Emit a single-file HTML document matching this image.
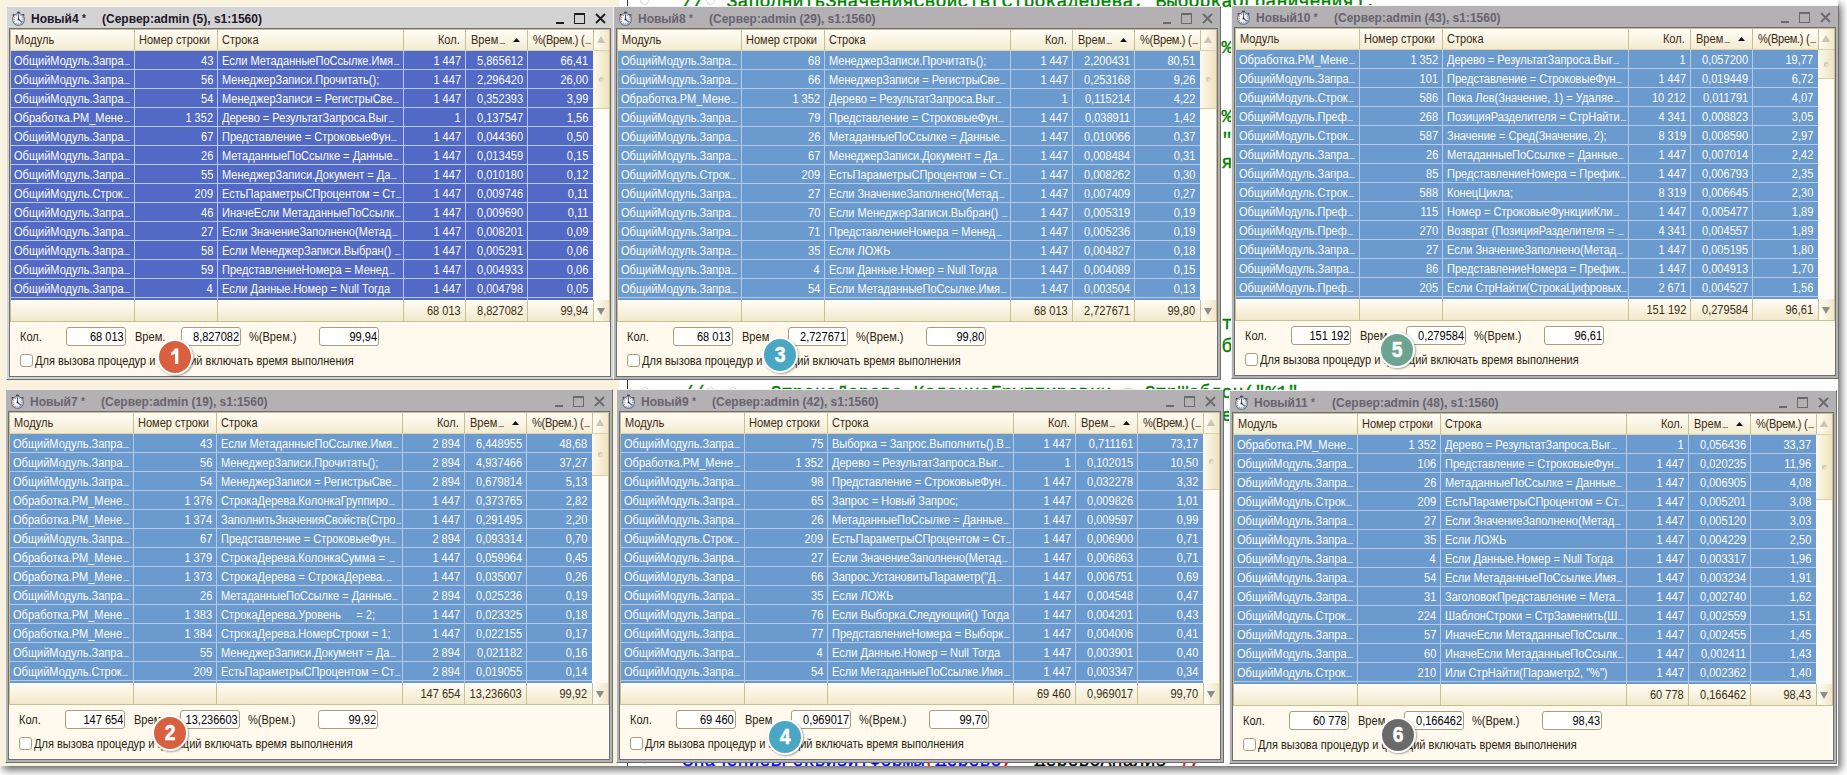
<!DOCTYPE html><html><head><meta charset="utf-8"><style>
*{margin:0;padding:0;box-sizing:border-box}
html,body{width:1847px;height:775px;overflow:hidden;background:#fff}
body{position:relative;font-family:"Liberation Sans",sans-serif;font-size:11px;color:#000}
.a{position:absolute}
.t{position:absolute;white-space:pre;line-height:19px;height:19px;font-size:12px}
.t>span,.lbl>span,.inp>span{display:inline-block;transform:scaleX(.92);transform-origin:0 0}
.r>span,.inp>span{transform-origin:100% 0}
.r{text-align:right}
.w{position:absolute;width:608px;height:374px;border:1px solid;overflow:hidden}
.cb{position:absolute;left:2px;top:21px;width:602px;height:349px;border:1px solid #6e6e6e;background:#fffaed;overflow:hidden}
.tt{position:absolute;top:3px;font-weight:bold;font-size:12px;line-height:19px;white-space:pre}
.hdr{position:absolute;height:20px;background:linear-gradient(#fffdf6,#f3ebd1)}
.ftr{position:absolute;height:21px;background:linear-gradient(#fffdf6,#f1e8cb)}
.vl{position:absolute;width:1px}
.code{position:absolute;-webkit-text-stroke:.35px currentColor;font-family:"Liberation Mono",monospace;font-size:18.33px;line-height:23px;white-space:pre;color:#008000}
.inp{position:absolute;font-size:12px;width:60px;height:19px;border:1px solid #a79f7a;border-radius:3px;background:#fff;text-align:right;padding-right:1px;padding-top:1px;line-height:17px;white-space:pre}
.lbl{position:absolute;white-space:pre;line-height:19px;font-size:12px}
.badge{position:absolute;width:36px;height:36px;border-radius:50%;border:2.5px solid #fff;color:#fff;font-weight:bold;font-size:22px;line-height:31px;text-align:center;box-shadow:1px 1px 2px rgba(0,0,0,.35)}
.el{display:inline-block;width:6px;height:1px;margin-left:1px;vertical-align:0;background:currentColor;opacity:.55}
.mk{position:absolute;width:9px;height:9px;border:1px solid #d4d4d4;border-radius:50%}
</style></head><body>

<div class="a" style="left:0;top:0;width:1838px;height:766px;box-shadow:3px 4px 8px rgba(0,0,0,.6);background:#fff"></div>
<div class="a" style="left:0;top:0;width:619px;height:766px;background:#f8f1de"></div>
<div class="a" style="left:0;top:0;width:1838px;height:766px;overflow:hidden">
<div class="a" style="left:627px;top:0;width:1px;height:766px;background:#303030"></div>
<div class="code" style="left:682.5px;top:-9px;color:#008000">//</div>
<div class="code" style="left:726.5px;top:-9px;color:#008000">ЗаполнитьЗначенияСвойств(СтрокаДерева, ВыборкаОграничения);</div>
<div class="mk" style="left:639.5px;top:-4px"></div>
<div class="mk" style="left:705.5px;top:-4px"></div>
<div class="code" style="left:1221.5px;top:37px;color:#008000">%</div>
<div class="code" style="left:1221.5px;top:106px;color:#008000">%</div>
<div class="code" style="left:1221.5px;top:129px;color:#008000">"</div>
<div class="code" style="left:1221.5px;top:152px;color:#008000">я</div>
<div class="code" style="left:1221.5px;top:313px;color:#008000">т</div>
<div class="code" style="left:1221.5px;top:336px;color:#008000">б</div>
<div class="code" style="left:1221.5px;top:405px;color:#008000">е</div>
<div class="code" style="left:682.5px;top:382px;color:#008000">//</div>
<div class="code" style="left:770.5px;top:382px;color:#008000">СтрокаДерева.КолонкаГруппировки = СтрШаблон("%1"</div>
<div class="mk" style="left:639.5px;top:387px"></div>
<div class="mk" style="left:705.5px;top:387px"></div>
<div class="mk" style="left:727.5px;top:387px"></div>
<div class="code" style="left:682.5px;top:750px;color:#0000ff">ЗначениеВРеквизитФормы</div>
<div class="code" style="left:924.5px;top:750px;color:#ff0000">(</div>
<div class="code" style="left:935.5px;top:750px;color:#0000ff">Дерево</div>
<div class="code" style="left:1001.5px;top:750px;color:#ff0000">,</div>
<div class="code" style="left:1023.5px;top:750px;color:#000000">"ДеревоАнализ"</div>
<div class="code" style="left:1177.5px;top:750px;color:#ff0000">);</div>
<div class="mk" style="left:639.5px;top:755px"></div>
</div>
<div class="w" style="left:6px;top:6px;background:#d3d3d3;border-color:#f4f4f4 #6e6e6e #6e6e6e #f4f4f4">
<svg class="a" style="left:4px;top:3px" width="16" height="16" viewBox="0 0 16 16"><rect x="6.2" y="1.7" width="2.6" height="1.2" fill="#2a2a2a"/><rect x="7" y="2.6" width="1" height="1.6" fill="#3d6b8f"/><path d="M1.8 5.6 L3.3 4.2 M13.2 5.6 L11.7 4.2" stroke="#2f2f2f" stroke-width="1.5"/><defs><linearGradient id="cg" x1="0" y1="0" x2="1" y2="1"><stop offset="0.3" stop-color="#ffffff"/><stop offset="1" stop-color="#bcdcf5"/></linearGradient></defs><circle cx="7.5" cy="9.4" r="5.9" fill="url(#cg)" stroke="#4f7a98" stroke-width="1.1"/><circle cx="7.50" cy="4.90" r="0.65" fill="#ee6a4c"/><circle cx="9.75" cy="5.50" r="0.65" fill="#ee6a4c"/><circle cx="11.40" cy="7.15" r="0.65" fill="#ee6a4c"/><circle cx="12.00" cy="9.40" r="0.65" fill="#ee6a4c"/><circle cx="11.40" cy="11.65" r="0.65" fill="#ee6a4c"/><circle cx="9.75" cy="13.30" r="0.65" fill="#ee6a4c"/><circle cx="7.50" cy="13.90" r="0.65" fill="#ee6a4c"/><circle cx="5.25" cy="13.30" r="0.65" fill="#ee6a4c"/><circle cx="3.60" cy="11.65" r="0.65" fill="#ee6a4c"/><circle cx="3.00" cy="9.40" r="0.65" fill="#ee6a4c"/><circle cx="3.60" cy="7.15" r="0.65" fill="#ee6a4c"/><circle cx="5.25" cy="5.50" r="0.65" fill="#ee6a4c"/><path d="M7.5 9.4 V4.4 M7.5 9.4 L11.1 12.4" stroke="#2a6494" stroke-width="1.1"/><circle cx="7.5" cy="9.4" r="0.9" fill="#222"/></svg>
<div class="tt" style="left:24px;color:#1e1628">Новый4 <span style="font-size:10px;position:relative;top:-1px">*</span></div>
<div class="tt" style="left:95px;color:#1e1628">(Сервер:admin (5), s1:1560)</div>
<div class="a" style="left:549px;top:15px;width:8px;height:2px;background:#1c1c1c"></div>
<div class="a" style="left:567px;top:6px;width:11px;height:11px;border:1px solid #1c1c1c;border-top-width:2px"></div>
<svg class="a" style="left:588px;top:6px" width="11" height="11" viewBox="0 0 11 11"><path d="M1 1 L10 10 M10 1 L1 10" stroke="#1c1c1c" stroke-width="1.8"/></svg>
<div class="cb">
<div class="a" style="left:0;top:0;width:600px;height:293px;border:1px solid #c9bf95;background:#fdfbf4"></div>
<div class="hdr" style="left:1px;top:1px;width:598px"></div>
<div class="a" style="left:1px;top:21px;width:598px;height:1px;background:#ddd2a8"></div>
<div class="a" style="left:1px;top:22px;width:582px;height:249px;background:#5269c6"></div>
<div class="a" style="left:1px;top:40px;width:582px;height:1px;background:#b6c9e6"></div>
<div class="a" style="left:1px;top:59px;width:582px;height:1px;background:#b6c9e6"></div>
<div class="a" style="left:1px;top:78px;width:582px;height:1px;background:#b6c9e6"></div>
<div class="a" style="left:1px;top:97px;width:582px;height:1px;background:#b6c9e6"></div>
<div class="a" style="left:1px;top:116px;width:582px;height:1px;background:#b6c9e6"></div>
<div class="a" style="left:1px;top:135px;width:582px;height:1px;background:#b6c9e6"></div>
<div class="a" style="left:1px;top:154px;width:582px;height:1px;background:#b6c9e6"></div>
<div class="a" style="left:1px;top:173px;width:582px;height:1px;background:#b6c9e6"></div>
<div class="a" style="left:1px;top:192px;width:582px;height:1px;background:#b6c9e6"></div>
<div class="a" style="left:1px;top:211px;width:582px;height:1px;background:#b6c9e6"></div>
<div class="a" style="left:1px;top:230px;width:582px;height:1px;background:#b6c9e6"></div>
<div class="a" style="left:1px;top:249px;width:582px;height:1px;background:#b6c9e6"></div>
<div class="a" style="left:1px;top:268px;width:582px;height:1px;background:#b6c9e6"></div>
<div class="ftr" style="left:1px;top:271px;width:598px"></div>
<div class="vl" style="left:124px;top:22px;height:249px;background:#b6c9e6"></div>
<div class="vl" style="left:124px;top:1px;height:20px;background:#c9bf95"></div>
<div class="vl" style="left:124px;top:271px;height:21px;background:#c9bf95"></div>
<div class="vl" style="left:207px;top:22px;height:249px;background:#b6c9e6"></div>
<div class="vl" style="left:207px;top:1px;height:20px;background:#c9bf95"></div>
<div class="vl" style="left:207px;top:271px;height:21px;background:#c9bf95"></div>
<div class="vl" style="left:393px;top:22px;height:249px;background:#b6c9e6"></div>
<div class="vl" style="left:393px;top:1px;height:20px;background:#c9bf95"></div>
<div class="vl" style="left:393px;top:271px;height:21px;background:#c9bf95"></div>
<div class="vl" style="left:455px;top:22px;height:249px;background:#b6c9e6"></div>
<div class="vl" style="left:455px;top:1px;height:20px;background:#c9bf95"></div>
<div class="vl" style="left:455px;top:271px;height:21px;background:#c9bf95"></div>
<div class="vl" style="left:517px;top:22px;height:249px;background:#b6c9e6"></div>
<div class="vl" style="left:517px;top:1px;height:20px;background:#c9bf95"></div>
<div class="vl" style="left:517px;top:271px;height:21px;background:#c9bf95"></div>
<div class="t" style="left:5px;top:2px;color:#3a2a10"><span>Модуль</span></div>
<div class="t" style="left:129px;top:2px;color:#3a2a10"><span>Номер строки</span></div>
<div class="t" style="left:212px;top:2px;color:#3a2a10"><span>Строка</span></div>
<div class="t r" style="left:394px;width:56px;top:2px;color:#3a2a10"><span>Кол.</span></div>
<div class="t" style="left:461px;top:2px;color:#3a2a10"><span>Врем<i class="el"></i></span></div>
<svg class="a" style="left:503px;top:9px" width="7" height="4"><path d="M0 4 L3.5 0 L7 4Z" fill="#111"/></svg>
<div class="t" style="left:523px;top:2px;color:#3a2a10;letter-spacing:-0.3px"><span>%(Врем.) (<i class="el"></i></span></div>
<div class="a" style="left:583px;top:1px;width:16px;height:20px;border-left:1px solid #c9bf95;background:linear-gradient(90deg,#fffdf5,#f1e8c8)"></div>
<svg class="a" style="left:587px;top:7px" width="8" height="7"><path d="M0 7 L4 0 L8 7Z" fill="#c9c5b3"/></svg>
<div class="a" style="left:583px;top:22px;width:16px;height:58px;background:linear-gradient(90deg,#fdf9ec,#eee3bd);border-bottom:1px solid #d9cea4"></div>
<div class="a" style="left:589px;top:48px;width:5px;height:5px;border-radius:50%;background:radial-gradient(circle at 65% 65%,#ebe5cf 15%,#b7b093 95%)"></div>
<div class="a" style="left:583px;top:271px;width:16px;height:21px;border-left:1px solid #c9bf95;background:linear-gradient(90deg,#fffdf5,#efe6c6)"></div>
<svg class="a" style="left:587px;top:279px" width="8" height="7"><path d="M0 0 L8 0 L4 7Z" fill="#8c8c8c"/></svg>
<div class="t" style="left:4px;top:23px;color:#fff"><span>ОбщийМодуль.Запра<i class="el"></i></span></div>
<div class="t r" style="left:125px;width:78px;top:23px;color:#fff"><span>43</span></div>
<div class="t" style="left:212px;top:23px;color:#fff;width:180px;overflow:hidden"><span>Если МетаданныеПоСсылке.Имя<i class="el"></i></span></div>
<div class="t r" style="left:394px;width:57px;top:23px;color:#fff"><span>1 447</span></div>
<div class="t r" style="left:456px;width:57px;top:23px;color:#fff"><span>5,865612</span></div>
<div class="t r" style="left:518px;width:60px;top:23px;color:#fff"><span>66,41</span></div>
<div class="t" style="left:4px;top:42px;color:#fff"><span>ОбщийМодуль.Запра<i class="el"></i></span></div>
<div class="t r" style="left:125px;width:78px;top:42px;color:#fff"><span>56</span></div>
<div class="t" style="left:212px;top:42px;color:#fff;width:180px;overflow:hidden"><span>МенеджерЗаписи.Прочитать();</span></div>
<div class="t r" style="left:394px;width:57px;top:42px;color:#fff"><span>1 447</span></div>
<div class="t r" style="left:456px;width:57px;top:42px;color:#fff"><span>2,296420</span></div>
<div class="t r" style="left:518px;width:60px;top:42px;color:#fff"><span>26,00</span></div>
<div class="t" style="left:4px;top:61px;color:#fff"><span>ОбщийМодуль.Запра<i class="el"></i></span></div>
<div class="t r" style="left:125px;width:78px;top:61px;color:#fff"><span>54</span></div>
<div class="t" style="left:212px;top:61px;color:#fff;width:180px;overflow:hidden"><span>МенеджерЗаписи = РегистрыСве<i class="el"></i></span></div>
<div class="t r" style="left:394px;width:57px;top:61px;color:#fff"><span>1 447</span></div>
<div class="t r" style="left:456px;width:57px;top:61px;color:#fff"><span>0,352393</span></div>
<div class="t r" style="left:518px;width:60px;top:61px;color:#fff"><span>3,99</span></div>
<div class="t" style="left:4px;top:80px;color:#fff"><span>Обработка.РМ_Мене<i class="el"></i></span></div>
<div class="t r" style="left:125px;width:78px;top:80px;color:#fff"><span>1 352</span></div>
<div class="t" style="left:212px;top:80px;color:#fff;width:180px;overflow:hidden"><span>Дерево = РезультатЗапроса.Выг<i class="el"></i></span></div>
<div class="t r" style="left:394px;width:57px;top:80px;color:#fff"><span>1</span></div>
<div class="t r" style="left:456px;width:57px;top:80px;color:#fff"><span>0,137547</span></div>
<div class="t r" style="left:518px;width:60px;top:80px;color:#fff"><span>1,56</span></div>
<div class="t" style="left:4px;top:99px;color:#fff"><span>ОбщийМодуль.Запра<i class="el"></i></span></div>
<div class="t r" style="left:125px;width:78px;top:99px;color:#fff"><span>67</span></div>
<div class="t" style="left:212px;top:99px;color:#fff;width:180px;overflow:hidden"><span>Представление = СтроковыеФун<i class="el"></i></span></div>
<div class="t r" style="left:394px;width:57px;top:99px;color:#fff"><span>1 447</span></div>
<div class="t r" style="left:456px;width:57px;top:99px;color:#fff"><span>0,044360</span></div>
<div class="t r" style="left:518px;width:60px;top:99px;color:#fff"><span>0,50</span></div>
<div class="t" style="left:4px;top:118px;color:#fff"><span>ОбщийМодуль.Запра<i class="el"></i></span></div>
<div class="t r" style="left:125px;width:78px;top:118px;color:#fff"><span>26</span></div>
<div class="t" style="left:212px;top:118px;color:#fff;width:180px;overflow:hidden"><span>МетаданныеПоСсылке = Данные<i class="el"></i></span></div>
<div class="t r" style="left:394px;width:57px;top:118px;color:#fff"><span>1 447</span></div>
<div class="t r" style="left:456px;width:57px;top:118px;color:#fff"><span>0,013459</span></div>
<div class="t r" style="left:518px;width:60px;top:118px;color:#fff"><span>0,15</span></div>
<div class="t" style="left:4px;top:137px;color:#fff"><span>ОбщийМодуль.Запра<i class="el"></i></span></div>
<div class="t r" style="left:125px;width:78px;top:137px;color:#fff"><span>55</span></div>
<div class="t" style="left:212px;top:137px;color:#fff;width:180px;overflow:hidden"><span>МенеджерЗаписи.Документ = Да<i class="el"></i></span></div>
<div class="t r" style="left:394px;width:57px;top:137px;color:#fff"><span>1 447</span></div>
<div class="t r" style="left:456px;width:57px;top:137px;color:#fff"><span>0,010180</span></div>
<div class="t r" style="left:518px;width:60px;top:137px;color:#fff"><span>0,12</span></div>
<div class="t" style="left:4px;top:156px;color:#fff"><span>ОбщийМодуль.Строк<i class="el"></i></span></div>
<div class="t r" style="left:125px;width:78px;top:156px;color:#fff"><span>209</span></div>
<div class="t" style="left:212px;top:156px;color:#fff;width:180px;overflow:hidden"><span>ЕстьПараметрыСПроцентом = Ст<i class="el"></i></span></div>
<div class="t r" style="left:394px;width:57px;top:156px;color:#fff"><span>1 447</span></div>
<div class="t r" style="left:456px;width:57px;top:156px;color:#fff"><span>0,009746</span></div>
<div class="t r" style="left:518px;width:60px;top:156px;color:#fff"><span>0,11</span></div>
<div class="t" style="left:4px;top:175px;color:#fff"><span>ОбщийМодуль.Запра<i class="el"></i></span></div>
<div class="t r" style="left:125px;width:78px;top:175px;color:#fff"><span>46</span></div>
<div class="t" style="left:212px;top:175px;color:#fff;width:180px;overflow:hidden"><span>ИначеЕсли МетаданныеПоСсылк<i class="el"></i></span></div>
<div class="t r" style="left:394px;width:57px;top:175px;color:#fff"><span>1 447</span></div>
<div class="t r" style="left:456px;width:57px;top:175px;color:#fff"><span>0,009690</span></div>
<div class="t r" style="left:518px;width:60px;top:175px;color:#fff"><span>0,11</span></div>
<div class="t" style="left:4px;top:194px;color:#fff"><span>ОбщийМодуль.Запра<i class="el"></i></span></div>
<div class="t r" style="left:125px;width:78px;top:194px;color:#fff"><span>27</span></div>
<div class="t" style="left:212px;top:194px;color:#fff;width:180px;overflow:hidden"><span>Если ЗначениеЗаполнено(Метад<i class="el"></i></span></div>
<div class="t r" style="left:394px;width:57px;top:194px;color:#fff"><span>1 447</span></div>
<div class="t r" style="left:456px;width:57px;top:194px;color:#fff"><span>0,008201</span></div>
<div class="t r" style="left:518px;width:60px;top:194px;color:#fff"><span>0,09</span></div>
<div class="t" style="left:4px;top:213px;color:#fff"><span>ОбщийМодуль.Запра<i class="el"></i></span></div>
<div class="t r" style="left:125px;width:78px;top:213px;color:#fff"><span>58</span></div>
<div class="t" style="left:212px;top:213px;color:#fff;width:180px;overflow:hidden"><span>Если МенеджерЗаписи.Выбран() <i class="el"></i></span></div>
<div class="t r" style="left:394px;width:57px;top:213px;color:#fff"><span>1 447</span></div>
<div class="t r" style="left:456px;width:57px;top:213px;color:#fff"><span>0,005291</span></div>
<div class="t r" style="left:518px;width:60px;top:213px;color:#fff"><span>0,06</span></div>
<div class="t" style="left:4px;top:232px;color:#fff"><span>ОбщийМодуль.Запра<i class="el"></i></span></div>
<div class="t r" style="left:125px;width:78px;top:232px;color:#fff"><span>59</span></div>
<div class="t" style="left:212px;top:232px;color:#fff;width:180px;overflow:hidden"><span>ПредставлениеНомера = Менед<i class="el"></i></span></div>
<div class="t r" style="left:394px;width:57px;top:232px;color:#fff"><span>1 447</span></div>
<div class="t r" style="left:456px;width:57px;top:232px;color:#fff"><span>0,004933</span></div>
<div class="t r" style="left:518px;width:60px;top:232px;color:#fff"><span>0,06</span></div>
<div class="t" style="left:4px;top:251px;color:#fff"><span>ОбщийМодуль.Запра<i class="el"></i></span></div>
<div class="t r" style="left:125px;width:78px;top:251px;color:#fff"><span>4</span></div>
<div class="t" style="left:212px;top:251px;color:#fff;width:180px;overflow:hidden"><span>Если Данные.Номер = Null Тогда</span></div>
<div class="t r" style="left:394px;width:57px;top:251px;color:#fff"><span>1 447</span></div>
<div class="t r" style="left:456px;width:57px;top:251px;color:#fff"><span>0,004798</span></div>
<div class="t r" style="left:518px;width:60px;top:251px;color:#fff"><span>0,05</span></div>
<div class="t r" style="left:394px;width:57px;top:273px;color:#3a2e10"><span>68 013</span></div>
<div class="t r" style="left:456px;width:57px;top:273px;color:#3a2e10"><span>8,827082</span></div>
<div class="t r" style="left:518px;width:60px;top:273px;color:#3a2e10"><span>99,94</span></div>
<div class="lbl" style="left:10px;top:299px;color:#2b2210"><span>Кол.</span></div>
<div class="inp" style="left:56px;top:298px"><span>68 013</span></div>
<div class="lbl" style="left:125px;top:299px;color:#2b2210"><span>Врем.</span></div>
<div class="inp" style="left:171px;top:298px"><span>8,827082</span></div>
<div class="lbl" style="left:239px;top:299px;color:#2b2210"><span>%(Врем.)</span></div>
<div class="inp" style="left:309px;top:298px"><span>99,94</span></div>
<div class="a" style="left:10px;top:325px;width:13px;height:13px;border:1px solid #a79f7a;border-radius:3px;background:#fff"></div>
<div class="lbl" style="left:25px;top:323px;color:#2b2210"><span>Для вызова процедур и функций включать время выполнения</span></div>
</div>
</div>
<div class="w" style="left:613px;top:6px;background:#b3b1b4;border-color:#f4f4f4 #6e6e6e #6e6e6e #f4f4f4">
<svg class="a" style="left:4px;top:3px" width="16" height="16" viewBox="0 0 16 16"><rect x="6.2" y="1.7" width="2.6" height="1.2" fill="#2a2a2a"/><rect x="7" y="2.6" width="1" height="1.6" fill="#3d6b8f"/><path d="M1.8 5.6 L3.3 4.2 M13.2 5.6 L11.7 4.2" stroke="#2f2f2f" stroke-width="1.5"/><defs><linearGradient id="cg" x1="0" y1="0" x2="1" y2="1"><stop offset="0.3" stop-color="#ffffff"/><stop offset="1" stop-color="#bcdcf5"/></linearGradient></defs><circle cx="7.5" cy="9.4" r="5.9" fill="url(#cg)" stroke="#4f7a98" stroke-width="1.1"/><circle cx="7.50" cy="4.90" r="0.65" fill="#ee6a4c"/><circle cx="9.75" cy="5.50" r="0.65" fill="#ee6a4c"/><circle cx="11.40" cy="7.15" r="0.65" fill="#ee6a4c"/><circle cx="12.00" cy="9.40" r="0.65" fill="#ee6a4c"/><circle cx="11.40" cy="11.65" r="0.65" fill="#ee6a4c"/><circle cx="9.75" cy="13.30" r="0.65" fill="#ee6a4c"/><circle cx="7.50" cy="13.90" r="0.65" fill="#ee6a4c"/><circle cx="5.25" cy="13.30" r="0.65" fill="#ee6a4c"/><circle cx="3.60" cy="11.65" r="0.65" fill="#ee6a4c"/><circle cx="3.00" cy="9.40" r="0.65" fill="#ee6a4c"/><circle cx="3.60" cy="7.15" r="0.65" fill="#ee6a4c"/><circle cx="5.25" cy="5.50" r="0.65" fill="#ee6a4c"/><path d="M7.5 9.4 V4.4 M7.5 9.4 L11.1 12.4" stroke="#2a6494" stroke-width="1.1"/><circle cx="7.5" cy="9.4" r="0.9" fill="#222"/></svg>
<div class="tt" style="left:24px;color:#68636d">Новый8 <span style="font-size:10px;position:relative;top:-1px">*</span></div>
<div class="tt" style="left:95px;color:#68636d">(Сервер:admin (29), s1:1560)</div>
<div class="a" style="left:549px;top:15px;width:8px;height:2px;background:#6a6a6a"></div>
<div class="a" style="left:567px;top:6px;width:11px;height:11px;border:1px solid #6a6a6a;border-top-width:2px"></div>
<svg class="a" style="left:588px;top:6px" width="11" height="11" viewBox="0 0 11 11"><path d="M1 1 L10 10 M10 1 L1 10" stroke="#6a6a6a" stroke-width="1.8"/></svg>
<div class="cb">
<div class="a" style="left:0;top:0;width:600px;height:293px;border:1px solid #c9bf95;background:#fdfbf4"></div>
<div class="hdr" style="left:1px;top:1px;width:598px"></div>
<div class="a" style="left:1px;top:21px;width:598px;height:1px;background:#ddd2a8"></div>
<div class="a" style="left:1px;top:22px;width:582px;height:249px;background:#6b9ace"></div>
<div class="a" style="left:1px;top:40px;width:582px;height:1px;background:#b6c9e6"></div>
<div class="a" style="left:1px;top:59px;width:582px;height:1px;background:#b6c9e6"></div>
<div class="a" style="left:1px;top:78px;width:582px;height:1px;background:#b6c9e6"></div>
<div class="a" style="left:1px;top:97px;width:582px;height:1px;background:#b6c9e6"></div>
<div class="a" style="left:1px;top:116px;width:582px;height:1px;background:#b6c9e6"></div>
<div class="a" style="left:1px;top:135px;width:582px;height:1px;background:#b6c9e6"></div>
<div class="a" style="left:1px;top:154px;width:582px;height:1px;background:#b6c9e6"></div>
<div class="a" style="left:1px;top:173px;width:582px;height:1px;background:#b6c9e6"></div>
<div class="a" style="left:1px;top:192px;width:582px;height:1px;background:#b6c9e6"></div>
<div class="a" style="left:1px;top:211px;width:582px;height:1px;background:#b6c9e6"></div>
<div class="a" style="left:1px;top:230px;width:582px;height:1px;background:#b6c9e6"></div>
<div class="a" style="left:1px;top:249px;width:582px;height:1px;background:#b6c9e6"></div>
<div class="a" style="left:1px;top:268px;width:582px;height:1px;background:#b6c9e6"></div>
<div class="ftr" style="left:1px;top:271px;width:598px"></div>
<div class="vl" style="left:124px;top:22px;height:249px;background:#b6c9e6"></div>
<div class="vl" style="left:124px;top:1px;height:20px;background:#c9bf95"></div>
<div class="vl" style="left:124px;top:271px;height:21px;background:#c9bf95"></div>
<div class="vl" style="left:207px;top:22px;height:249px;background:#b6c9e6"></div>
<div class="vl" style="left:207px;top:1px;height:20px;background:#c9bf95"></div>
<div class="vl" style="left:207px;top:271px;height:21px;background:#c9bf95"></div>
<div class="vl" style="left:393px;top:22px;height:249px;background:#b6c9e6"></div>
<div class="vl" style="left:393px;top:1px;height:20px;background:#c9bf95"></div>
<div class="vl" style="left:393px;top:271px;height:21px;background:#c9bf95"></div>
<div class="vl" style="left:455px;top:22px;height:249px;background:#b6c9e6"></div>
<div class="vl" style="left:455px;top:1px;height:20px;background:#c9bf95"></div>
<div class="vl" style="left:455px;top:271px;height:21px;background:#c9bf95"></div>
<div class="vl" style="left:517px;top:22px;height:249px;background:#b6c9e6"></div>
<div class="vl" style="left:517px;top:1px;height:20px;background:#c9bf95"></div>
<div class="vl" style="left:517px;top:271px;height:21px;background:#c9bf95"></div>
<div class="t" style="left:5px;top:2px;color:#3a2a10"><span>Модуль</span></div>
<div class="t" style="left:129px;top:2px;color:#3a2a10"><span>Номер строки</span></div>
<div class="t" style="left:212px;top:2px;color:#3a2a10"><span>Строка</span></div>
<div class="t r" style="left:394px;width:56px;top:2px;color:#3a2a10"><span>Кол.</span></div>
<div class="t" style="left:461px;top:2px;color:#3a2a10"><span>Врем<i class="el"></i></span></div>
<svg class="a" style="left:503px;top:9px" width="7" height="4"><path d="M0 4 L3.5 0 L7 4Z" fill="#111"/></svg>
<div class="t" style="left:523px;top:2px;color:#3a2a10;letter-spacing:-0.3px"><span>%(Врем.) (<i class="el"></i></span></div>
<div class="a" style="left:583px;top:1px;width:16px;height:20px;border-left:1px solid #c9bf95;background:linear-gradient(90deg,#fffdf5,#f1e8c8)"></div>
<svg class="a" style="left:587px;top:7px" width="8" height="7"><path d="M0 7 L4 0 L8 7Z" fill="#c9c5b3"/></svg>
<div class="a" style="left:583px;top:22px;width:16px;height:58px;background:linear-gradient(90deg,#fdf9ec,#eee3bd);border-bottom:1px solid #d9cea4"></div>
<div class="a" style="left:589px;top:48px;width:5px;height:5px;border-radius:50%;background:radial-gradient(circle at 65% 65%,#ebe5cf 15%,#b7b093 95%)"></div>
<div class="a" style="left:583px;top:271px;width:16px;height:21px;border-left:1px solid #c9bf95;background:linear-gradient(90deg,#fffdf5,#efe6c6)"></div>
<svg class="a" style="left:587px;top:279px" width="8" height="7"><path d="M0 0 L8 0 L4 7Z" fill="#8c8c8c"/></svg>
<div class="t" style="left:4px;top:23px;color:#fff"><span>ОбщийМодуль.Запра<i class="el"></i></span></div>
<div class="t r" style="left:125px;width:78px;top:23px;color:#fff"><span>68</span></div>
<div class="t" style="left:212px;top:23px;color:#fff;width:180px;overflow:hidden"><span>МенеджерЗаписи.Прочитать();</span></div>
<div class="t r" style="left:394px;width:57px;top:23px;color:#fff"><span>1 447</span></div>
<div class="t r" style="left:456px;width:57px;top:23px;color:#fff"><span>2,200431</span></div>
<div class="t r" style="left:518px;width:60px;top:23px;color:#fff"><span>80,51</span></div>
<div class="t" style="left:4px;top:42px;color:#fff"><span>ОбщийМодуль.Запра<i class="el"></i></span></div>
<div class="t r" style="left:125px;width:78px;top:42px;color:#fff"><span>66</span></div>
<div class="t" style="left:212px;top:42px;color:#fff;width:180px;overflow:hidden"><span>МенеджерЗаписи = РегистрыСве<i class="el"></i></span></div>
<div class="t r" style="left:394px;width:57px;top:42px;color:#fff"><span>1 447</span></div>
<div class="t r" style="left:456px;width:57px;top:42px;color:#fff"><span>0,253168</span></div>
<div class="t r" style="left:518px;width:60px;top:42px;color:#fff"><span>9,26</span></div>
<div class="t" style="left:4px;top:61px;color:#fff"><span>Обработка.РМ_Мене<i class="el"></i></span></div>
<div class="t r" style="left:125px;width:78px;top:61px;color:#fff"><span>1 352</span></div>
<div class="t" style="left:212px;top:61px;color:#fff;width:180px;overflow:hidden"><span>Дерево = РезультатЗапроса.Выг<i class="el"></i></span></div>
<div class="t r" style="left:394px;width:57px;top:61px;color:#fff"><span>1</span></div>
<div class="t r" style="left:456px;width:57px;top:61px;color:#fff"><span>0,115214</span></div>
<div class="t r" style="left:518px;width:60px;top:61px;color:#fff"><span>4,22</span></div>
<div class="t" style="left:4px;top:80px;color:#fff"><span>ОбщийМодуль.Запра<i class="el"></i></span></div>
<div class="t r" style="left:125px;width:78px;top:80px;color:#fff"><span>79</span></div>
<div class="t" style="left:212px;top:80px;color:#fff;width:180px;overflow:hidden"><span>Представление = СтроковыеФун<i class="el"></i></span></div>
<div class="t r" style="left:394px;width:57px;top:80px;color:#fff"><span>1 447</span></div>
<div class="t r" style="left:456px;width:57px;top:80px;color:#fff"><span>0,038911</span></div>
<div class="t r" style="left:518px;width:60px;top:80px;color:#fff"><span>1,42</span></div>
<div class="t" style="left:4px;top:99px;color:#fff"><span>ОбщийМодуль.Запра<i class="el"></i></span></div>
<div class="t r" style="left:125px;width:78px;top:99px;color:#fff"><span>26</span></div>
<div class="t" style="left:212px;top:99px;color:#fff;width:180px;overflow:hidden"><span>МетаданныеПоСсылке = Данные<i class="el"></i></span></div>
<div class="t r" style="left:394px;width:57px;top:99px;color:#fff"><span>1 447</span></div>
<div class="t r" style="left:456px;width:57px;top:99px;color:#fff"><span>0,010066</span></div>
<div class="t r" style="left:518px;width:60px;top:99px;color:#fff"><span>0,37</span></div>
<div class="t" style="left:4px;top:118px;color:#fff"><span>ОбщийМодуль.Запра<i class="el"></i></span></div>
<div class="t r" style="left:125px;width:78px;top:118px;color:#fff"><span>67</span></div>
<div class="t" style="left:212px;top:118px;color:#fff;width:180px;overflow:hidden"><span>МенеджерЗаписи.Документ = Да<i class="el"></i></span></div>
<div class="t r" style="left:394px;width:57px;top:118px;color:#fff"><span>1 447</span></div>
<div class="t r" style="left:456px;width:57px;top:118px;color:#fff"><span>0,008484</span></div>
<div class="t r" style="left:518px;width:60px;top:118px;color:#fff"><span>0,31</span></div>
<div class="t" style="left:4px;top:137px;color:#fff"><span>ОбщийМодуль.Строк<i class="el"></i></span></div>
<div class="t r" style="left:125px;width:78px;top:137px;color:#fff"><span>209</span></div>
<div class="t" style="left:212px;top:137px;color:#fff;width:180px;overflow:hidden"><span>ЕстьПараметрыСПроцентом = Ст<i class="el"></i></span></div>
<div class="t r" style="left:394px;width:57px;top:137px;color:#fff"><span>1 447</span></div>
<div class="t r" style="left:456px;width:57px;top:137px;color:#fff"><span>0,008262</span></div>
<div class="t r" style="left:518px;width:60px;top:137px;color:#fff"><span>0,30</span></div>
<div class="t" style="left:4px;top:156px;color:#fff"><span>ОбщийМодуль.Запра<i class="el"></i></span></div>
<div class="t r" style="left:125px;width:78px;top:156px;color:#fff"><span>27</span></div>
<div class="t" style="left:212px;top:156px;color:#fff;width:180px;overflow:hidden"><span>Если ЗначениеЗаполнено(Метад<i class="el"></i></span></div>
<div class="t r" style="left:394px;width:57px;top:156px;color:#fff"><span>1 447</span></div>
<div class="t r" style="left:456px;width:57px;top:156px;color:#fff"><span>0,007409</span></div>
<div class="t r" style="left:518px;width:60px;top:156px;color:#fff"><span>0,27</span></div>
<div class="t" style="left:4px;top:175px;color:#fff"><span>ОбщийМодуль.Запра<i class="el"></i></span></div>
<div class="t r" style="left:125px;width:78px;top:175px;color:#fff"><span>70</span></div>
<div class="t" style="left:212px;top:175px;color:#fff;width:180px;overflow:hidden"><span>Если МенеджерЗаписи.Выбран() <i class="el"></i></span></div>
<div class="t r" style="left:394px;width:57px;top:175px;color:#fff"><span>1 447</span></div>
<div class="t r" style="left:456px;width:57px;top:175px;color:#fff"><span>0,005319</span></div>
<div class="t r" style="left:518px;width:60px;top:175px;color:#fff"><span>0,19</span></div>
<div class="t" style="left:4px;top:194px;color:#fff"><span>ОбщийМодуль.Запра<i class="el"></i></span></div>
<div class="t r" style="left:125px;width:78px;top:194px;color:#fff"><span>71</span></div>
<div class="t" style="left:212px;top:194px;color:#fff;width:180px;overflow:hidden"><span>ПредставлениеНомера = Менед<i class="el"></i></span></div>
<div class="t r" style="left:394px;width:57px;top:194px;color:#fff"><span>1 447</span></div>
<div class="t r" style="left:456px;width:57px;top:194px;color:#fff"><span>0,005236</span></div>
<div class="t r" style="left:518px;width:60px;top:194px;color:#fff"><span>0,19</span></div>
<div class="t" style="left:4px;top:213px;color:#fff"><span>ОбщийМодуль.Запра<i class="el"></i></span></div>
<div class="t r" style="left:125px;width:78px;top:213px;color:#fff"><span>35</span></div>
<div class="t" style="left:212px;top:213px;color:#fff;width:180px;overflow:hidden"><span>Если ЛОЖЬ</span></div>
<div class="t r" style="left:394px;width:57px;top:213px;color:#fff"><span>1 447</span></div>
<div class="t r" style="left:456px;width:57px;top:213px;color:#fff"><span>0,004827</span></div>
<div class="t r" style="left:518px;width:60px;top:213px;color:#fff"><span>0,18</span></div>
<div class="t" style="left:4px;top:232px;color:#fff"><span>ОбщийМодуль.Запра<i class="el"></i></span></div>
<div class="t r" style="left:125px;width:78px;top:232px;color:#fff"><span>4</span></div>
<div class="t" style="left:212px;top:232px;color:#fff;width:180px;overflow:hidden"><span>Если Данные.Номер = Null Тогда</span></div>
<div class="t r" style="left:394px;width:57px;top:232px;color:#fff"><span>1 447</span></div>
<div class="t r" style="left:456px;width:57px;top:232px;color:#fff"><span>0,004089</span></div>
<div class="t r" style="left:518px;width:60px;top:232px;color:#fff"><span>0,15</span></div>
<div class="t" style="left:4px;top:251px;color:#fff"><span>ОбщийМодуль.Запра<i class="el"></i></span></div>
<div class="t r" style="left:125px;width:78px;top:251px;color:#fff"><span>54</span></div>
<div class="t" style="left:212px;top:251px;color:#fff;width:180px;overflow:hidden"><span>Если МетаданныеПоСсылке.Имя<i class="el"></i></span></div>
<div class="t r" style="left:394px;width:57px;top:251px;color:#fff"><span>1 447</span></div>
<div class="t r" style="left:456px;width:57px;top:251px;color:#fff"><span>0,003504</span></div>
<div class="t r" style="left:518px;width:60px;top:251px;color:#fff"><span>0,13</span></div>
<div class="t r" style="left:394px;width:57px;top:273px;color:#3a2e10"><span>68 013</span></div>
<div class="t r" style="left:456px;width:57px;top:273px;color:#3a2e10"><span>2,727671</span></div>
<div class="t r" style="left:518px;width:60px;top:273px;color:#3a2e10"><span>99,80</span></div>
<div class="lbl" style="left:10px;top:299px;color:#2b2210"><span>Кол.</span></div>
<div class="inp" style="left:56px;top:298px"><span>68 013</span></div>
<div class="lbl" style="left:125px;top:299px;color:#2b2210"><span>Врем</span></div>
<div class="inp" style="left:171px;top:298px"><span>2,727671</span></div>
<div class="lbl" style="left:239px;top:299px;color:#2b2210"><span>%(Врем.)</span></div>
<div class="inp" style="left:309px;top:298px"><span>99,80</span></div>
<div class="a" style="left:10px;top:325px;width:13px;height:13px;border:1px solid #a79f7a;border-radius:3px;background:#fff"></div>
<div class="lbl" style="left:25px;top:323px;color:#2b2210"><span>Для вызова процедур и функций включать время выполнения</span></div>
</div>
</div>
<div class="w" style="left:1231px;top:5px;background:#b3b1b4;border-color:#f4f4f4 #6e6e6e #6e6e6e #f4f4f4">
<svg class="a" style="left:4px;top:3px" width="16" height="16" viewBox="0 0 16 16"><rect x="6.2" y="1.7" width="2.6" height="1.2" fill="#2a2a2a"/><rect x="7" y="2.6" width="1" height="1.6" fill="#3d6b8f"/><path d="M1.8 5.6 L3.3 4.2 M13.2 5.6 L11.7 4.2" stroke="#2f2f2f" stroke-width="1.5"/><defs><linearGradient id="cg" x1="0" y1="0" x2="1" y2="1"><stop offset="0.3" stop-color="#ffffff"/><stop offset="1" stop-color="#bcdcf5"/></linearGradient></defs><circle cx="7.5" cy="9.4" r="5.9" fill="url(#cg)" stroke="#4f7a98" stroke-width="1.1"/><circle cx="7.50" cy="4.90" r="0.65" fill="#ee6a4c"/><circle cx="9.75" cy="5.50" r="0.65" fill="#ee6a4c"/><circle cx="11.40" cy="7.15" r="0.65" fill="#ee6a4c"/><circle cx="12.00" cy="9.40" r="0.65" fill="#ee6a4c"/><circle cx="11.40" cy="11.65" r="0.65" fill="#ee6a4c"/><circle cx="9.75" cy="13.30" r="0.65" fill="#ee6a4c"/><circle cx="7.50" cy="13.90" r="0.65" fill="#ee6a4c"/><circle cx="5.25" cy="13.30" r="0.65" fill="#ee6a4c"/><circle cx="3.60" cy="11.65" r="0.65" fill="#ee6a4c"/><circle cx="3.00" cy="9.40" r="0.65" fill="#ee6a4c"/><circle cx="3.60" cy="7.15" r="0.65" fill="#ee6a4c"/><circle cx="5.25" cy="5.50" r="0.65" fill="#ee6a4c"/><path d="M7.5 9.4 V4.4 M7.5 9.4 L11.1 12.4" stroke="#2a6494" stroke-width="1.1"/><circle cx="7.5" cy="9.4" r="0.9" fill="#222"/></svg>
<div class="tt" style="left:24px;color:#68636d">Новый10 <span style="font-size:10px;position:relative;top:-1px">*</span></div>
<div class="tt" style="left:102px;color:#68636d">(Сервер:admin (43), s1:1560)</div>
<div class="a" style="left:549px;top:15px;width:8px;height:2px;background:#6a6a6a"></div>
<div class="a" style="left:567px;top:6px;width:11px;height:11px;border:1px solid #6a6a6a;border-top-width:2px"></div>
<svg class="a" style="left:588px;top:6px" width="11" height="11" viewBox="0 0 11 11"><path d="M1 1 L10 10 M10 1 L1 10" stroke="#6a6a6a" stroke-width="1.8"/></svg>
<div class="cb">
<div class="a" style="left:0;top:0;width:600px;height:293px;border:1px solid #c9bf95;background:#fdfbf4"></div>
<div class="hdr" style="left:1px;top:1px;width:598px"></div>
<div class="a" style="left:1px;top:21px;width:598px;height:1px;background:#ddd2a8"></div>
<div class="a" style="left:1px;top:22px;width:582px;height:249px;background:#6b9ace"></div>
<div class="a" style="left:1px;top:40px;width:582px;height:1px;background:#b6c9e6"></div>
<div class="a" style="left:1px;top:59px;width:582px;height:1px;background:#b6c9e6"></div>
<div class="a" style="left:1px;top:78px;width:582px;height:1px;background:#b6c9e6"></div>
<div class="a" style="left:1px;top:97px;width:582px;height:1px;background:#b6c9e6"></div>
<div class="a" style="left:1px;top:116px;width:582px;height:1px;background:#b6c9e6"></div>
<div class="a" style="left:1px;top:135px;width:582px;height:1px;background:#b6c9e6"></div>
<div class="a" style="left:1px;top:154px;width:582px;height:1px;background:#b6c9e6"></div>
<div class="a" style="left:1px;top:173px;width:582px;height:1px;background:#b6c9e6"></div>
<div class="a" style="left:1px;top:192px;width:582px;height:1px;background:#b6c9e6"></div>
<div class="a" style="left:1px;top:211px;width:582px;height:1px;background:#b6c9e6"></div>
<div class="a" style="left:1px;top:230px;width:582px;height:1px;background:#b6c9e6"></div>
<div class="a" style="left:1px;top:249px;width:582px;height:1px;background:#b6c9e6"></div>
<div class="a" style="left:1px;top:268px;width:582px;height:1px;background:#b6c9e6"></div>
<div class="ftr" style="left:1px;top:271px;width:598px"></div>
<div class="vl" style="left:124px;top:22px;height:249px;background:#b6c9e6"></div>
<div class="vl" style="left:124px;top:1px;height:20px;background:#c9bf95"></div>
<div class="vl" style="left:124px;top:271px;height:21px;background:#c9bf95"></div>
<div class="vl" style="left:207px;top:22px;height:249px;background:#b6c9e6"></div>
<div class="vl" style="left:207px;top:1px;height:20px;background:#c9bf95"></div>
<div class="vl" style="left:207px;top:271px;height:21px;background:#c9bf95"></div>
<div class="vl" style="left:393px;top:22px;height:249px;background:#b6c9e6"></div>
<div class="vl" style="left:393px;top:1px;height:20px;background:#c9bf95"></div>
<div class="vl" style="left:393px;top:271px;height:21px;background:#c9bf95"></div>
<div class="vl" style="left:455px;top:22px;height:249px;background:#b6c9e6"></div>
<div class="vl" style="left:455px;top:1px;height:20px;background:#c9bf95"></div>
<div class="vl" style="left:455px;top:271px;height:21px;background:#c9bf95"></div>
<div class="vl" style="left:517px;top:22px;height:249px;background:#b6c9e6"></div>
<div class="vl" style="left:517px;top:1px;height:20px;background:#c9bf95"></div>
<div class="vl" style="left:517px;top:271px;height:21px;background:#c9bf95"></div>
<div class="t" style="left:5px;top:2px;color:#3a2a10"><span>Модуль</span></div>
<div class="t" style="left:129px;top:2px;color:#3a2a10"><span>Номер строки</span></div>
<div class="t" style="left:212px;top:2px;color:#3a2a10"><span>Строка</span></div>
<div class="t r" style="left:394px;width:56px;top:2px;color:#3a2a10"><span>Кол.</span></div>
<div class="t" style="left:461px;top:2px;color:#3a2a10"><span>Врем<i class="el"></i></span></div>
<svg class="a" style="left:503px;top:9px" width="7" height="4"><path d="M0 4 L3.5 0 L7 4Z" fill="#111"/></svg>
<div class="t" style="left:523px;top:2px;color:#3a2a10;letter-spacing:-0.3px"><span>%(Врем.) (<i class="el"></i></span></div>
<div class="a" style="left:583px;top:1px;width:16px;height:20px;border-left:1px solid #c9bf95;background:linear-gradient(90deg,#fffdf5,#f1e8c8)"></div>
<svg class="a" style="left:587px;top:7px" width="8" height="7"><path d="M0 7 L4 0 L8 7Z" fill="#c9c5b3"/></svg>
<div class="a" style="left:583px;top:22px;width:16px;height:29px;background:linear-gradient(90deg,#fdf9ec,#eee3bd);border-bottom:1px solid #d9cea4"></div>
<div class="a" style="left:589px;top:34px;width:5px;height:5px;border-radius:50%;background:radial-gradient(circle at 65% 65%,#ebe5cf 15%,#b7b093 95%)"></div>
<div class="a" style="left:583px;top:271px;width:16px;height:21px;border-left:1px solid #c9bf95;background:linear-gradient(90deg,#fffdf5,#efe6c6)"></div>
<svg class="a" style="left:587px;top:279px" width="8" height="7"><path d="M0 0 L8 0 L4 7Z" fill="#8c8c8c"/></svg>
<div class="t" style="left:4px;top:23px;color:#fff"><span>Обработка.РМ_Мене<i class="el"></i></span></div>
<div class="t r" style="left:125px;width:78px;top:23px;color:#fff"><span>1 352</span></div>
<div class="t" style="left:212px;top:23px;color:#fff;width:180px;overflow:hidden"><span>Дерево = РезультатЗапроса.Выг<i class="el"></i></span></div>
<div class="t r" style="left:394px;width:57px;top:23px;color:#fff"><span>1</span></div>
<div class="t r" style="left:456px;width:57px;top:23px;color:#fff"><span>0,057200</span></div>
<div class="t r" style="left:518px;width:60px;top:23px;color:#fff"><span>19,77</span></div>
<div class="t" style="left:4px;top:42px;color:#fff"><span>ОбщийМодуль.Запра<i class="el"></i></span></div>
<div class="t r" style="left:125px;width:78px;top:42px;color:#fff"><span>101</span></div>
<div class="t" style="left:212px;top:42px;color:#fff;width:180px;overflow:hidden"><span>Представление = СтроковыеФун<i class="el"></i></span></div>
<div class="t r" style="left:394px;width:57px;top:42px;color:#fff"><span>1 447</span></div>
<div class="t r" style="left:456px;width:57px;top:42px;color:#fff"><span>0,019449</span></div>
<div class="t r" style="left:518px;width:60px;top:42px;color:#fff"><span>6,72</span></div>
<div class="t" style="left:4px;top:61px;color:#fff"><span>ОбщийМодуль.Строк<i class="el"></i></span></div>
<div class="t r" style="left:125px;width:78px;top:61px;color:#fff"><span>586</span></div>
<div class="t" style="left:212px;top:61px;color:#fff;width:180px;overflow:hidden"><span>Пока Лев(Значение, 1) = Удаляе<i class="el"></i></span></div>
<div class="t r" style="left:394px;width:57px;top:61px;color:#fff"><span>10 212</span></div>
<div class="t r" style="left:456px;width:57px;top:61px;color:#fff"><span>0,011791</span></div>
<div class="t r" style="left:518px;width:60px;top:61px;color:#fff"><span>4,07</span></div>
<div class="t" style="left:4px;top:80px;color:#fff"><span>ОбщийМодуль.Преф<i class="el"></i></span></div>
<div class="t r" style="left:125px;width:78px;top:80px;color:#fff"><span>268</span></div>
<div class="t" style="left:212px;top:80px;color:#fff;width:180px;overflow:hidden"><span>ПозицияРазделителя = СтрНайти<i class="el"></i></span></div>
<div class="t r" style="left:394px;width:57px;top:80px;color:#fff"><span>4 341</span></div>
<div class="t r" style="left:456px;width:57px;top:80px;color:#fff"><span>0,008823</span></div>
<div class="t r" style="left:518px;width:60px;top:80px;color:#fff"><span>3,05</span></div>
<div class="t" style="left:4px;top:99px;color:#fff"><span>ОбщийМодуль.Строк<i class="el"></i></span></div>
<div class="t r" style="left:125px;width:78px;top:99px;color:#fff"><span>587</span></div>
<div class="t" style="left:212px;top:99px;color:#fff;width:180px;overflow:hidden"><span>Значение = Сред(Значение, 2);</span></div>
<div class="t r" style="left:394px;width:57px;top:99px;color:#fff"><span>8 319</span></div>
<div class="t r" style="left:456px;width:57px;top:99px;color:#fff"><span>0,008590</span></div>
<div class="t r" style="left:518px;width:60px;top:99px;color:#fff"><span>2,97</span></div>
<div class="t" style="left:4px;top:118px;color:#fff"><span>ОбщийМодуль.Запра<i class="el"></i></span></div>
<div class="t r" style="left:125px;width:78px;top:118px;color:#fff"><span>26</span></div>
<div class="t" style="left:212px;top:118px;color:#fff;width:180px;overflow:hidden"><span>МетаданныеПоСсылке = Данные<i class="el"></i></span></div>
<div class="t r" style="left:394px;width:57px;top:118px;color:#fff"><span>1 447</span></div>
<div class="t r" style="left:456px;width:57px;top:118px;color:#fff"><span>0,007014</span></div>
<div class="t r" style="left:518px;width:60px;top:118px;color:#fff"><span>2,42</span></div>
<div class="t" style="left:4px;top:137px;color:#fff"><span>ОбщийМодуль.Запра<i class="el"></i></span></div>
<div class="t r" style="left:125px;width:78px;top:137px;color:#fff"><span>85</span></div>
<div class="t" style="left:212px;top:137px;color:#fff;width:180px;overflow:hidden"><span>ПредставлениеНомера = Префик<i class="el"></i></span></div>
<div class="t r" style="left:394px;width:57px;top:137px;color:#fff"><span>1 447</span></div>
<div class="t r" style="left:456px;width:57px;top:137px;color:#fff"><span>0,006793</span></div>
<div class="t r" style="left:518px;width:60px;top:137px;color:#fff"><span>2,35</span></div>
<div class="t" style="left:4px;top:156px;color:#fff"><span>ОбщийМодуль.Строк<i class="el"></i></span></div>
<div class="t r" style="left:125px;width:78px;top:156px;color:#fff"><span>588</span></div>
<div class="t" style="left:212px;top:156px;color:#fff;width:180px;overflow:hidden"><span>КонецЦикла;</span></div>
<div class="t r" style="left:394px;width:57px;top:156px;color:#fff"><span>8 319</span></div>
<div class="t r" style="left:456px;width:57px;top:156px;color:#fff"><span>0,006645</span></div>
<div class="t r" style="left:518px;width:60px;top:156px;color:#fff"><span>2,30</span></div>
<div class="t" style="left:4px;top:175px;color:#fff"><span>ОбщийМодуль.Преф<i class="el"></i></span></div>
<div class="t r" style="left:125px;width:78px;top:175px;color:#fff"><span>115</span></div>
<div class="t" style="left:212px;top:175px;color:#fff;width:180px;overflow:hidden"><span>Номер = СтроковыеФункцииКли<i class="el"></i></span></div>
<div class="t r" style="left:394px;width:57px;top:175px;color:#fff"><span>1 447</span></div>
<div class="t r" style="left:456px;width:57px;top:175px;color:#fff"><span>0,005477</span></div>
<div class="t r" style="left:518px;width:60px;top:175px;color:#fff"><span>1,89</span></div>
<div class="t" style="left:4px;top:194px;color:#fff"><span>ОбщийМодуль.Преф<i class="el"></i></span></div>
<div class="t r" style="left:125px;width:78px;top:194px;color:#fff"><span>270</span></div>
<div class="t" style="left:212px;top:194px;color:#fff;width:180px;overflow:hidden"><span>Возврат (ПозицияРазделителя = <i class="el"></i></span></div>
<div class="t r" style="left:394px;width:57px;top:194px;color:#fff"><span>4 341</span></div>
<div class="t r" style="left:456px;width:57px;top:194px;color:#fff"><span>0,004557</span></div>
<div class="t r" style="left:518px;width:60px;top:194px;color:#fff"><span>1,89</span></div>
<div class="t" style="left:4px;top:213px;color:#fff"><span>ОбщийМодуль.Запра<i class="el"></i></span></div>
<div class="t r" style="left:125px;width:78px;top:213px;color:#fff"><span>27</span></div>
<div class="t" style="left:212px;top:213px;color:#fff;width:180px;overflow:hidden"><span>Если ЗначениеЗаполнено(Метад<i class="el"></i></span></div>
<div class="t r" style="left:394px;width:57px;top:213px;color:#fff"><span>1 447</span></div>
<div class="t r" style="left:456px;width:57px;top:213px;color:#fff"><span>0,005195</span></div>
<div class="t r" style="left:518px;width:60px;top:213px;color:#fff"><span>1,80</span></div>
<div class="t" style="left:4px;top:232px;color:#fff"><span>ОбщийМодуль.Запра<i class="el"></i></span></div>
<div class="t r" style="left:125px;width:78px;top:232px;color:#fff"><span>86</span></div>
<div class="t" style="left:212px;top:232px;color:#fff;width:180px;overflow:hidden"><span>ПредставлениеНомера = Префик<i class="el"></i></span></div>
<div class="t r" style="left:394px;width:57px;top:232px;color:#fff"><span>1 447</span></div>
<div class="t r" style="left:456px;width:57px;top:232px;color:#fff"><span>0,004913</span></div>
<div class="t r" style="left:518px;width:60px;top:232px;color:#fff"><span>1,70</span></div>
<div class="t" style="left:4px;top:251px;color:#fff"><span>ОбщийМодуль.Преф<i class="el"></i></span></div>
<div class="t r" style="left:125px;width:78px;top:251px;color:#fff"><span>205</span></div>
<div class="t" style="left:212px;top:251px;color:#fff;width:180px;overflow:hidden"><span>Если СтрНайти(СтрокаЦифровых<i class="el"></i></span></div>
<div class="t r" style="left:394px;width:57px;top:251px;color:#fff"><span>2 671</span></div>
<div class="t r" style="left:456px;width:57px;top:251px;color:#fff"><span>0,004527</span></div>
<div class="t r" style="left:518px;width:60px;top:251px;color:#fff"><span>1,56</span></div>
<div class="t r" style="left:394px;width:57px;top:273px;color:#3a2e10"><span>151 192</span></div>
<div class="t r" style="left:456px;width:57px;top:273px;color:#3a2e10"><span>0,279584</span></div>
<div class="t r" style="left:518px;width:60px;top:273px;color:#3a2e10"><span>96,61</span></div>
<div class="lbl" style="left:10px;top:299px;color:#2b2210"><span>Кол.</span></div>
<div class="inp" style="left:56px;top:298px"><span>151 192</span></div>
<div class="lbl" style="left:125px;top:299px;color:#2b2210"><span>Врем</span></div>
<div class="inp" style="left:171px;top:298px"><span>0,279584</span></div>
<div class="lbl" style="left:239px;top:299px;color:#2b2210"><span>%(Врем.)</span></div>
<div class="inp" style="left:309px;top:298px"><span>96,61</span></div>
<div class="a" style="left:10px;top:325px;width:13px;height:13px;border:1px solid #a79f7a;border-radius:3px;background:#fff"></div>
<div class="lbl" style="left:25px;top:323px;color:#2b2210"><span>Для вызова процедур и функций включать время выполнения</span></div>
</div>
</div>
<div class="w" style="left:5px;top:389px;background:#b3b1b4;border-color:#f4f4f4 #6e6e6e #6e6e6e #f4f4f4">
<svg class="a" style="left:4px;top:3px" width="16" height="16" viewBox="0 0 16 16"><rect x="6.2" y="1.7" width="2.6" height="1.2" fill="#2a2a2a"/><rect x="7" y="2.6" width="1" height="1.6" fill="#3d6b8f"/><path d="M1.8 5.6 L3.3 4.2 M13.2 5.6 L11.7 4.2" stroke="#2f2f2f" stroke-width="1.5"/><defs><linearGradient id="cg" x1="0" y1="0" x2="1" y2="1"><stop offset="0.3" stop-color="#ffffff"/><stop offset="1" stop-color="#bcdcf5"/></linearGradient></defs><circle cx="7.5" cy="9.4" r="5.9" fill="url(#cg)" stroke="#4f7a98" stroke-width="1.1"/><circle cx="7.50" cy="4.90" r="0.65" fill="#ee6a4c"/><circle cx="9.75" cy="5.50" r="0.65" fill="#ee6a4c"/><circle cx="11.40" cy="7.15" r="0.65" fill="#ee6a4c"/><circle cx="12.00" cy="9.40" r="0.65" fill="#ee6a4c"/><circle cx="11.40" cy="11.65" r="0.65" fill="#ee6a4c"/><circle cx="9.75" cy="13.30" r="0.65" fill="#ee6a4c"/><circle cx="7.50" cy="13.90" r="0.65" fill="#ee6a4c"/><circle cx="5.25" cy="13.30" r="0.65" fill="#ee6a4c"/><circle cx="3.60" cy="11.65" r="0.65" fill="#ee6a4c"/><circle cx="3.00" cy="9.40" r="0.65" fill="#ee6a4c"/><circle cx="3.60" cy="7.15" r="0.65" fill="#ee6a4c"/><circle cx="5.25" cy="5.50" r="0.65" fill="#ee6a4c"/><path d="M7.5 9.4 V4.4 M7.5 9.4 L11.1 12.4" stroke="#2a6494" stroke-width="1.1"/><circle cx="7.5" cy="9.4" r="0.9" fill="#222"/></svg>
<div class="tt" style="left:24px;color:#68636d">Новый7 <span style="font-size:10px;position:relative;top:-1px">*</span></div>
<div class="tt" style="left:95px;color:#68636d">(Сервер:admin (19), s1:1560)</div>
<div class="a" style="left:549px;top:15px;width:8px;height:2px;background:#6a6a6a"></div>
<div class="a" style="left:567px;top:6px;width:11px;height:11px;border:1px solid #6a6a6a;border-top-width:2px"></div>
<svg class="a" style="left:588px;top:6px" width="11" height="11" viewBox="0 0 11 11"><path d="M1 1 L10 10 M10 1 L1 10" stroke="#6a6a6a" stroke-width="1.8"/></svg>
<div class="cb">
<div class="a" style="left:0;top:0;width:600px;height:293px;border:1px solid #c9bf95;background:#fdfbf4"></div>
<div class="hdr" style="left:1px;top:1px;width:598px"></div>
<div class="a" style="left:1px;top:21px;width:598px;height:1px;background:#ddd2a8"></div>
<div class="a" style="left:1px;top:22px;width:582px;height:249px;background:#6b9ace"></div>
<div class="a" style="left:1px;top:40px;width:582px;height:1px;background:#b6c9e6"></div>
<div class="a" style="left:1px;top:59px;width:582px;height:1px;background:#b6c9e6"></div>
<div class="a" style="left:1px;top:78px;width:582px;height:1px;background:#b6c9e6"></div>
<div class="a" style="left:1px;top:97px;width:582px;height:1px;background:#b6c9e6"></div>
<div class="a" style="left:1px;top:116px;width:582px;height:1px;background:#b6c9e6"></div>
<div class="a" style="left:1px;top:135px;width:582px;height:1px;background:#b6c9e6"></div>
<div class="a" style="left:1px;top:154px;width:582px;height:1px;background:#b6c9e6"></div>
<div class="a" style="left:1px;top:173px;width:582px;height:1px;background:#b6c9e6"></div>
<div class="a" style="left:1px;top:192px;width:582px;height:1px;background:#b6c9e6"></div>
<div class="a" style="left:1px;top:211px;width:582px;height:1px;background:#b6c9e6"></div>
<div class="a" style="left:1px;top:230px;width:582px;height:1px;background:#b6c9e6"></div>
<div class="a" style="left:1px;top:249px;width:582px;height:1px;background:#b6c9e6"></div>
<div class="a" style="left:1px;top:268px;width:582px;height:1px;background:#b6c9e6"></div>
<div class="ftr" style="left:1px;top:271px;width:598px"></div>
<div class="vl" style="left:124px;top:22px;height:249px;background:#b6c9e6"></div>
<div class="vl" style="left:124px;top:1px;height:20px;background:#c9bf95"></div>
<div class="vl" style="left:124px;top:271px;height:21px;background:#c9bf95"></div>
<div class="vl" style="left:207px;top:22px;height:249px;background:#b6c9e6"></div>
<div class="vl" style="left:207px;top:1px;height:20px;background:#c9bf95"></div>
<div class="vl" style="left:207px;top:271px;height:21px;background:#c9bf95"></div>
<div class="vl" style="left:393px;top:22px;height:249px;background:#b6c9e6"></div>
<div class="vl" style="left:393px;top:1px;height:20px;background:#c9bf95"></div>
<div class="vl" style="left:393px;top:271px;height:21px;background:#c9bf95"></div>
<div class="vl" style="left:455px;top:22px;height:249px;background:#b6c9e6"></div>
<div class="vl" style="left:455px;top:1px;height:20px;background:#c9bf95"></div>
<div class="vl" style="left:455px;top:271px;height:21px;background:#c9bf95"></div>
<div class="vl" style="left:517px;top:22px;height:249px;background:#b6c9e6"></div>
<div class="vl" style="left:517px;top:1px;height:20px;background:#c9bf95"></div>
<div class="vl" style="left:517px;top:271px;height:21px;background:#c9bf95"></div>
<div class="t" style="left:5px;top:2px;color:#3a2a10"><span>Модуль</span></div>
<div class="t" style="left:129px;top:2px;color:#3a2a10"><span>Номер строки</span></div>
<div class="t" style="left:212px;top:2px;color:#3a2a10"><span>Строка</span></div>
<div class="t r" style="left:394px;width:56px;top:2px;color:#3a2a10"><span>Кол.</span></div>
<div class="t" style="left:461px;top:2px;color:#3a2a10"><span>Врем<i class="el"></i></span></div>
<svg class="a" style="left:503px;top:9px" width="7" height="4"><path d="M0 4 L3.5 0 L7 4Z" fill="#111"/></svg>
<div class="t" style="left:523px;top:2px;color:#3a2a10;letter-spacing:-0.3px"><span>%(Врем.) (<i class="el"></i></span></div>
<div class="a" style="left:583px;top:1px;width:16px;height:20px;border-left:1px solid #c9bf95;background:linear-gradient(90deg,#fffdf5,#f1e8c8)"></div>
<svg class="a" style="left:587px;top:7px" width="8" height="7"><path d="M0 7 L4 0 L8 7Z" fill="#c9c5b3"/></svg>
<div class="a" style="left:583px;top:22px;width:16px;height:42px;background:linear-gradient(90deg,#fdf9ec,#eee3bd);border-bottom:1px solid #d9cea4"></div>
<div class="a" style="left:589px;top:40px;width:5px;height:5px;border-radius:50%;background:radial-gradient(circle at 65% 65%,#ebe5cf 15%,#b7b093 95%)"></div>
<div class="a" style="left:583px;top:271px;width:16px;height:21px;border-left:1px solid #c9bf95;background:linear-gradient(90deg,#fffdf5,#efe6c6)"></div>
<svg class="a" style="left:587px;top:279px" width="8" height="7"><path d="M0 0 L8 0 L4 7Z" fill="#8c8c8c"/></svg>
<div class="t" style="left:4px;top:23px;color:#fff"><span>ОбщийМодуль.Запра<i class="el"></i></span></div>
<div class="t r" style="left:125px;width:78px;top:23px;color:#fff"><span>43</span></div>
<div class="t" style="left:212px;top:23px;color:#fff;width:180px;overflow:hidden"><span>Если МетаданныеПоСсылке.Имя<i class="el"></i></span></div>
<div class="t r" style="left:394px;width:57px;top:23px;color:#fff"><span>2 894</span></div>
<div class="t r" style="left:456px;width:57px;top:23px;color:#fff"><span>6,448955</span></div>
<div class="t r" style="left:518px;width:60px;top:23px;color:#fff"><span>48,68</span></div>
<div class="t" style="left:4px;top:42px;color:#fff"><span>ОбщийМодуль.Запра<i class="el"></i></span></div>
<div class="t r" style="left:125px;width:78px;top:42px;color:#fff"><span>56</span></div>
<div class="t" style="left:212px;top:42px;color:#fff;width:180px;overflow:hidden"><span>МенеджерЗаписи.Прочитать();</span></div>
<div class="t r" style="left:394px;width:57px;top:42px;color:#fff"><span>2 894</span></div>
<div class="t r" style="left:456px;width:57px;top:42px;color:#fff"><span>4,937466</span></div>
<div class="t r" style="left:518px;width:60px;top:42px;color:#fff"><span>37,27</span></div>
<div class="t" style="left:4px;top:61px;color:#fff"><span>ОбщийМодуль.Запра<i class="el"></i></span></div>
<div class="t r" style="left:125px;width:78px;top:61px;color:#fff"><span>54</span></div>
<div class="t" style="left:212px;top:61px;color:#fff;width:180px;overflow:hidden"><span>МенеджерЗаписи = РегистрыСве<i class="el"></i></span></div>
<div class="t r" style="left:394px;width:57px;top:61px;color:#fff"><span>2 894</span></div>
<div class="t r" style="left:456px;width:57px;top:61px;color:#fff"><span>0,679814</span></div>
<div class="t r" style="left:518px;width:60px;top:61px;color:#fff"><span>5,13</span></div>
<div class="t" style="left:4px;top:80px;color:#fff"><span>Обработка.РМ_Мене<i class="el"></i></span></div>
<div class="t r" style="left:125px;width:78px;top:80px;color:#fff"><span>1 376</span></div>
<div class="t" style="left:212px;top:80px;color:#fff;width:180px;overflow:hidden"><span>СтрокаДерева.КолонкаГруппиро<i class="el"></i></span></div>
<div class="t r" style="left:394px;width:57px;top:80px;color:#fff"><span>1 447</span></div>
<div class="t r" style="left:456px;width:57px;top:80px;color:#fff"><span>0,373765</span></div>
<div class="t r" style="left:518px;width:60px;top:80px;color:#fff"><span>2,82</span></div>
<div class="t" style="left:4px;top:99px;color:#fff"><span>Обработка.РМ_Мене<i class="el"></i></span></div>
<div class="t r" style="left:125px;width:78px;top:99px;color:#fff"><span>1 374</span></div>
<div class="t" style="left:212px;top:99px;color:#fff;width:180px;overflow:hidden"><span>ЗаполнитьЗначенияСвойств(Стро<i class="el"></i></span></div>
<div class="t r" style="left:394px;width:57px;top:99px;color:#fff"><span>1 447</span></div>
<div class="t r" style="left:456px;width:57px;top:99px;color:#fff"><span>0,291495</span></div>
<div class="t r" style="left:518px;width:60px;top:99px;color:#fff"><span>2,20</span></div>
<div class="t" style="left:4px;top:118px;color:#fff"><span>ОбщийМодуль.Запра<i class="el"></i></span></div>
<div class="t r" style="left:125px;width:78px;top:118px;color:#fff"><span>67</span></div>
<div class="t" style="left:212px;top:118px;color:#fff;width:180px;overflow:hidden"><span>Представление = СтроковыеФун<i class="el"></i></span></div>
<div class="t r" style="left:394px;width:57px;top:118px;color:#fff"><span>2 894</span></div>
<div class="t r" style="left:456px;width:57px;top:118px;color:#fff"><span>0,093314</span></div>
<div class="t r" style="left:518px;width:60px;top:118px;color:#fff"><span>0,70</span></div>
<div class="t" style="left:4px;top:137px;color:#fff"><span>Обработка.РМ_Мене<i class="el"></i></span></div>
<div class="t r" style="left:125px;width:78px;top:137px;color:#fff"><span>1 379</span></div>
<div class="t" style="left:212px;top:137px;color:#fff;width:180px;overflow:hidden"><span>СтрокаДерева.КолонкаСумма = <i class="el"></i></span></div>
<div class="t r" style="left:394px;width:57px;top:137px;color:#fff"><span>1 447</span></div>
<div class="t r" style="left:456px;width:57px;top:137px;color:#fff"><span>0,059964</span></div>
<div class="t r" style="left:518px;width:60px;top:137px;color:#fff"><span>0,45</span></div>
<div class="t" style="left:4px;top:156px;color:#fff"><span>Обработка.РМ_Мене<i class="el"></i></span></div>
<div class="t r" style="left:125px;width:78px;top:156px;color:#fff"><span>1 373</span></div>
<div class="t" style="left:212px;top:156px;color:#fff;width:180px;overflow:hidden"><span>СтрокаДерева = СтрокаДерева.<i class="el"></i></span></div>
<div class="t r" style="left:394px;width:57px;top:156px;color:#fff"><span>1 447</span></div>
<div class="t r" style="left:456px;width:57px;top:156px;color:#fff"><span>0,035007</span></div>
<div class="t r" style="left:518px;width:60px;top:156px;color:#fff"><span>0,26</span></div>
<div class="t" style="left:4px;top:175px;color:#fff"><span>ОбщийМодуль.Запра<i class="el"></i></span></div>
<div class="t r" style="left:125px;width:78px;top:175px;color:#fff"><span>26</span></div>
<div class="t" style="left:212px;top:175px;color:#fff;width:180px;overflow:hidden"><span>МетаданныеПоСсылке = Данные<i class="el"></i></span></div>
<div class="t r" style="left:394px;width:57px;top:175px;color:#fff"><span>2 894</span></div>
<div class="t r" style="left:456px;width:57px;top:175px;color:#fff"><span>0,025236</span></div>
<div class="t r" style="left:518px;width:60px;top:175px;color:#fff"><span>0,19</span></div>
<div class="t" style="left:4px;top:194px;color:#fff"><span>Обработка.РМ_Мене<i class="el"></i></span></div>
<div class="t r" style="left:125px;width:78px;top:194px;color:#fff"><span>1 383</span></div>
<div class="t" style="left:212px;top:194px;color:#fff;width:180px;overflow:hidden"><span>СтрокаДерева.Уровень     = 2;</span></div>
<div class="t r" style="left:394px;width:57px;top:194px;color:#fff"><span>1 447</span></div>
<div class="t r" style="left:456px;width:57px;top:194px;color:#fff"><span>0,023325</span></div>
<div class="t r" style="left:518px;width:60px;top:194px;color:#fff"><span>0,18</span></div>
<div class="t" style="left:4px;top:213px;color:#fff"><span>Обработка.РМ_Мене<i class="el"></i></span></div>
<div class="t r" style="left:125px;width:78px;top:213px;color:#fff"><span>1 384</span></div>
<div class="t" style="left:212px;top:213px;color:#fff;width:180px;overflow:hidden"><span>СтрокаДерева.НомерСтроки = 1;</span></div>
<div class="t r" style="left:394px;width:57px;top:213px;color:#fff"><span>1 447</span></div>
<div class="t r" style="left:456px;width:57px;top:213px;color:#fff"><span>0,022155</span></div>
<div class="t r" style="left:518px;width:60px;top:213px;color:#fff"><span>0,17</span></div>
<div class="t" style="left:4px;top:232px;color:#fff"><span>ОбщийМодуль.Запра<i class="el"></i></span></div>
<div class="t r" style="left:125px;width:78px;top:232px;color:#fff"><span>55</span></div>
<div class="t" style="left:212px;top:232px;color:#fff;width:180px;overflow:hidden"><span>МенеджерЗаписи.Документ = Да<i class="el"></i></span></div>
<div class="t r" style="left:394px;width:57px;top:232px;color:#fff"><span>2 894</span></div>
<div class="t r" style="left:456px;width:57px;top:232px;color:#fff"><span>0,021182</span></div>
<div class="t r" style="left:518px;width:60px;top:232px;color:#fff"><span>0,16</span></div>
<div class="t" style="left:4px;top:251px;color:#fff"><span>ОбщийМодуль.Строк<i class="el"></i></span></div>
<div class="t r" style="left:125px;width:78px;top:251px;color:#fff"><span>209</span></div>
<div class="t" style="left:212px;top:251px;color:#fff;width:180px;overflow:hidden"><span>ЕстьПараметрыСПроцентом = Ст<i class="el"></i></span></div>
<div class="t r" style="left:394px;width:57px;top:251px;color:#fff"><span>2 894</span></div>
<div class="t r" style="left:456px;width:57px;top:251px;color:#fff"><span>0,019055</span></div>
<div class="t r" style="left:518px;width:60px;top:251px;color:#fff"><span>0,14</span></div>
<div class="t r" style="left:394px;width:57px;top:273px;color:#3a2e10"><span>147 654</span></div>
<div class="t r" style="left:456px;width:57px;top:273px;color:#3a2e10"><span>13,236603</span></div>
<div class="t r" style="left:518px;width:60px;top:273px;color:#3a2e10"><span>99,92</span></div>
<div class="lbl" style="left:10px;top:299px;color:#2b2210"><span>Кол.</span></div>
<div class="inp" style="left:56px;top:298px"><span>147 654</span></div>
<div class="lbl" style="left:125px;top:299px;color:#2b2210"><span>Врем</span></div>
<div class="inp" style="left:171px;top:298px"><span>13,236603</span></div>
<div class="lbl" style="left:239px;top:299px;color:#2b2210"><span>%(Врем.)</span></div>
<div class="inp" style="left:309px;top:298px"><span>99,92</span></div>
<div class="a" style="left:10px;top:325px;width:13px;height:13px;border:1px solid #a79f7a;border-radius:3px;background:#fff"></div>
<div class="lbl" style="left:25px;top:323px;color:#2b2210"><span>Для вызова процедур и функций включать время выполнения</span></div>
</div>
</div>
<div class="w" style="left:616px;top:389px;background:#b3b1b4;border-color:#f4f4f4 #6e6e6e #6e6e6e #f4f4f4">
<svg class="a" style="left:4px;top:3px" width="16" height="16" viewBox="0 0 16 16"><rect x="6.2" y="1.7" width="2.6" height="1.2" fill="#2a2a2a"/><rect x="7" y="2.6" width="1" height="1.6" fill="#3d6b8f"/><path d="M1.8 5.6 L3.3 4.2 M13.2 5.6 L11.7 4.2" stroke="#2f2f2f" stroke-width="1.5"/><defs><linearGradient id="cg" x1="0" y1="0" x2="1" y2="1"><stop offset="0.3" stop-color="#ffffff"/><stop offset="1" stop-color="#bcdcf5"/></linearGradient></defs><circle cx="7.5" cy="9.4" r="5.9" fill="url(#cg)" stroke="#4f7a98" stroke-width="1.1"/><circle cx="7.50" cy="4.90" r="0.65" fill="#ee6a4c"/><circle cx="9.75" cy="5.50" r="0.65" fill="#ee6a4c"/><circle cx="11.40" cy="7.15" r="0.65" fill="#ee6a4c"/><circle cx="12.00" cy="9.40" r="0.65" fill="#ee6a4c"/><circle cx="11.40" cy="11.65" r="0.65" fill="#ee6a4c"/><circle cx="9.75" cy="13.30" r="0.65" fill="#ee6a4c"/><circle cx="7.50" cy="13.90" r="0.65" fill="#ee6a4c"/><circle cx="5.25" cy="13.30" r="0.65" fill="#ee6a4c"/><circle cx="3.60" cy="11.65" r="0.65" fill="#ee6a4c"/><circle cx="3.00" cy="9.40" r="0.65" fill="#ee6a4c"/><circle cx="3.60" cy="7.15" r="0.65" fill="#ee6a4c"/><circle cx="5.25" cy="5.50" r="0.65" fill="#ee6a4c"/><path d="M7.5 9.4 V4.4 M7.5 9.4 L11.1 12.4" stroke="#2a6494" stroke-width="1.1"/><circle cx="7.5" cy="9.4" r="0.9" fill="#222"/></svg>
<div class="tt" style="left:24px;color:#68636d">Новый9 <span style="font-size:10px;position:relative;top:-1px">*</span></div>
<div class="tt" style="left:95px;color:#68636d">(Сервер:admin (42), s1:1560)</div>
<div class="a" style="left:549px;top:15px;width:8px;height:2px;background:#6a6a6a"></div>
<div class="a" style="left:567px;top:6px;width:11px;height:11px;border:1px solid #6a6a6a;border-top-width:2px"></div>
<svg class="a" style="left:588px;top:6px" width="11" height="11" viewBox="0 0 11 11"><path d="M1 1 L10 10 M10 1 L1 10" stroke="#6a6a6a" stroke-width="1.8"/></svg>
<div class="cb">
<div class="a" style="left:0;top:0;width:600px;height:293px;border:1px solid #c9bf95;background:#fdfbf4"></div>
<div class="hdr" style="left:1px;top:1px;width:598px"></div>
<div class="a" style="left:1px;top:21px;width:598px;height:1px;background:#ddd2a8"></div>
<div class="a" style="left:1px;top:22px;width:582px;height:249px;background:#6b9ace"></div>
<div class="a" style="left:1px;top:40px;width:582px;height:1px;background:#b6c9e6"></div>
<div class="a" style="left:1px;top:59px;width:582px;height:1px;background:#b6c9e6"></div>
<div class="a" style="left:1px;top:78px;width:582px;height:1px;background:#b6c9e6"></div>
<div class="a" style="left:1px;top:97px;width:582px;height:1px;background:#b6c9e6"></div>
<div class="a" style="left:1px;top:116px;width:582px;height:1px;background:#b6c9e6"></div>
<div class="a" style="left:1px;top:135px;width:582px;height:1px;background:#b6c9e6"></div>
<div class="a" style="left:1px;top:154px;width:582px;height:1px;background:#b6c9e6"></div>
<div class="a" style="left:1px;top:173px;width:582px;height:1px;background:#b6c9e6"></div>
<div class="a" style="left:1px;top:192px;width:582px;height:1px;background:#b6c9e6"></div>
<div class="a" style="left:1px;top:211px;width:582px;height:1px;background:#b6c9e6"></div>
<div class="a" style="left:1px;top:230px;width:582px;height:1px;background:#b6c9e6"></div>
<div class="a" style="left:1px;top:249px;width:582px;height:1px;background:#b6c9e6"></div>
<div class="a" style="left:1px;top:268px;width:582px;height:1px;background:#b6c9e6"></div>
<div class="ftr" style="left:1px;top:271px;width:598px"></div>
<div class="vl" style="left:124px;top:22px;height:249px;background:#b6c9e6"></div>
<div class="vl" style="left:124px;top:1px;height:20px;background:#c9bf95"></div>
<div class="vl" style="left:124px;top:271px;height:21px;background:#c9bf95"></div>
<div class="vl" style="left:207px;top:22px;height:249px;background:#b6c9e6"></div>
<div class="vl" style="left:207px;top:1px;height:20px;background:#c9bf95"></div>
<div class="vl" style="left:207px;top:271px;height:21px;background:#c9bf95"></div>
<div class="vl" style="left:393px;top:22px;height:249px;background:#b6c9e6"></div>
<div class="vl" style="left:393px;top:1px;height:20px;background:#c9bf95"></div>
<div class="vl" style="left:393px;top:271px;height:21px;background:#c9bf95"></div>
<div class="vl" style="left:455px;top:22px;height:249px;background:#b6c9e6"></div>
<div class="vl" style="left:455px;top:1px;height:20px;background:#c9bf95"></div>
<div class="vl" style="left:455px;top:271px;height:21px;background:#c9bf95"></div>
<div class="vl" style="left:517px;top:22px;height:249px;background:#b6c9e6"></div>
<div class="vl" style="left:517px;top:1px;height:20px;background:#c9bf95"></div>
<div class="vl" style="left:517px;top:271px;height:21px;background:#c9bf95"></div>
<div class="t" style="left:5px;top:2px;color:#3a2a10"><span>Модуль</span></div>
<div class="t" style="left:129px;top:2px;color:#3a2a10"><span>Номер строки</span></div>
<div class="t" style="left:212px;top:2px;color:#3a2a10"><span>Строка</span></div>
<div class="t r" style="left:394px;width:56px;top:2px;color:#3a2a10"><span>Кол.</span></div>
<div class="t" style="left:461px;top:2px;color:#3a2a10"><span>Врем<i class="el"></i></span></div>
<svg class="a" style="left:503px;top:9px" width="7" height="4"><path d="M0 4 L3.5 0 L7 4Z" fill="#111"/></svg>
<div class="t" style="left:523px;top:2px;color:#3a2a10;letter-spacing:-0.3px"><span>%(Врем.) (<i class="el"></i></span></div>
<div class="a" style="left:583px;top:1px;width:16px;height:20px;border-left:1px solid #c9bf95;background:linear-gradient(90deg,#fffdf5,#f1e8c8)"></div>
<svg class="a" style="left:587px;top:7px" width="8" height="7"><path d="M0 7 L4 0 L8 7Z" fill="#c9c5b3"/></svg>
<div class="a" style="left:583px;top:22px;width:16px;height:56px;background:linear-gradient(90deg,#fdf9ec,#eee3bd);border-bottom:1px solid #d9cea4"></div>
<div class="a" style="left:589px;top:47px;width:5px;height:5px;border-radius:50%;background:radial-gradient(circle at 65% 65%,#ebe5cf 15%,#b7b093 95%)"></div>
<div class="a" style="left:583px;top:271px;width:16px;height:21px;border-left:1px solid #c9bf95;background:linear-gradient(90deg,#fffdf5,#efe6c6)"></div>
<svg class="a" style="left:587px;top:279px" width="8" height="7"><path d="M0 0 L8 0 L4 7Z" fill="#8c8c8c"/></svg>
<div class="t" style="left:4px;top:23px;color:#fff"><span>ОбщийМодуль.Запра<i class="el"></i></span></div>
<div class="t r" style="left:125px;width:78px;top:23px;color:#fff"><span>75</span></div>
<div class="t" style="left:212px;top:23px;color:#fff;width:180px;overflow:hidden"><span>Выборка = Запрос.Выполнить().В<i class="el"></i></span></div>
<div class="t r" style="left:394px;width:57px;top:23px;color:#fff"><span>1 447</span></div>
<div class="t r" style="left:456px;width:57px;top:23px;color:#fff"><span>0,711161</span></div>
<div class="t r" style="left:518px;width:60px;top:23px;color:#fff"><span>73,17</span></div>
<div class="t" style="left:4px;top:42px;color:#fff"><span>Обработка.РМ_Мене<i class="el"></i></span></div>
<div class="t r" style="left:125px;width:78px;top:42px;color:#fff"><span>1 352</span></div>
<div class="t" style="left:212px;top:42px;color:#fff;width:180px;overflow:hidden"><span>Дерево = РезультатЗапроса.Выг<i class="el"></i></span></div>
<div class="t r" style="left:394px;width:57px;top:42px;color:#fff"><span>1</span></div>
<div class="t r" style="left:456px;width:57px;top:42px;color:#fff"><span>0,102015</span></div>
<div class="t r" style="left:518px;width:60px;top:42px;color:#fff"><span>10,50</span></div>
<div class="t" style="left:4px;top:61px;color:#fff"><span>ОбщийМодуль.Запра<i class="el"></i></span></div>
<div class="t r" style="left:125px;width:78px;top:61px;color:#fff"><span>98</span></div>
<div class="t" style="left:212px;top:61px;color:#fff;width:180px;overflow:hidden"><span>Представление = СтроковыеФун<i class="el"></i></span></div>
<div class="t r" style="left:394px;width:57px;top:61px;color:#fff"><span>1 447</span></div>
<div class="t r" style="left:456px;width:57px;top:61px;color:#fff"><span>0,032278</span></div>
<div class="t r" style="left:518px;width:60px;top:61px;color:#fff"><span>3,32</span></div>
<div class="t" style="left:4px;top:80px;color:#fff"><span>ОбщийМодуль.Запра<i class="el"></i></span></div>
<div class="t r" style="left:125px;width:78px;top:80px;color:#fff"><span>65</span></div>
<div class="t" style="left:212px;top:80px;color:#fff;width:180px;overflow:hidden"><span>Запрос = Новый Запрос;</span></div>
<div class="t r" style="left:394px;width:57px;top:80px;color:#fff"><span>1 447</span></div>
<div class="t r" style="left:456px;width:57px;top:80px;color:#fff"><span>0,009826</span></div>
<div class="t r" style="left:518px;width:60px;top:80px;color:#fff"><span>1,01</span></div>
<div class="t" style="left:4px;top:99px;color:#fff"><span>ОбщийМодуль.Запра<i class="el"></i></span></div>
<div class="t r" style="left:125px;width:78px;top:99px;color:#fff"><span>26</span></div>
<div class="t" style="left:212px;top:99px;color:#fff;width:180px;overflow:hidden"><span>МетаданныеПоСсылке = Данные<i class="el"></i></span></div>
<div class="t r" style="left:394px;width:57px;top:99px;color:#fff"><span>1 447</span></div>
<div class="t r" style="left:456px;width:57px;top:99px;color:#fff"><span>0,009597</span></div>
<div class="t r" style="left:518px;width:60px;top:99px;color:#fff"><span>0,99</span></div>
<div class="t" style="left:4px;top:118px;color:#fff"><span>ОбщийМодуль.Строк<i class="el"></i></span></div>
<div class="t r" style="left:125px;width:78px;top:118px;color:#fff"><span>209</span></div>
<div class="t" style="left:212px;top:118px;color:#fff;width:180px;overflow:hidden"><span>ЕстьПараметрыСПроцентом = Ст<i class="el"></i></span></div>
<div class="t r" style="left:394px;width:57px;top:118px;color:#fff"><span>1 447</span></div>
<div class="t r" style="left:456px;width:57px;top:118px;color:#fff"><span>0,006900</span></div>
<div class="t r" style="left:518px;width:60px;top:118px;color:#fff"><span>0,71</span></div>
<div class="t" style="left:4px;top:137px;color:#fff"><span>ОбщийМодуль.Запра<i class="el"></i></span></div>
<div class="t r" style="left:125px;width:78px;top:137px;color:#fff"><span>27</span></div>
<div class="t" style="left:212px;top:137px;color:#fff;width:180px;overflow:hidden"><span>Если ЗначениеЗаполнено(Метад<i class="el"></i></span></div>
<div class="t r" style="left:394px;width:57px;top:137px;color:#fff"><span>1 447</span></div>
<div class="t r" style="left:456px;width:57px;top:137px;color:#fff"><span>0,006863</span></div>
<div class="t r" style="left:518px;width:60px;top:137px;color:#fff"><span>0,71</span></div>
<div class="t" style="left:4px;top:156px;color:#fff"><span>ОбщийМодуль.Запра<i class="el"></i></span></div>
<div class="t r" style="left:125px;width:78px;top:156px;color:#fff"><span>66</span></div>
<div class="t" style="left:212px;top:156px;color:#fff;width:180px;overflow:hidden"><span>Запрос.УстановитьПараметр("Д<i class="el"></i></span></div>
<div class="t r" style="left:394px;width:57px;top:156px;color:#fff"><span>1 447</span></div>
<div class="t r" style="left:456px;width:57px;top:156px;color:#fff"><span>0,006751</span></div>
<div class="t r" style="left:518px;width:60px;top:156px;color:#fff"><span>0,69</span></div>
<div class="t" style="left:4px;top:175px;color:#fff"><span>ОбщийМодуль.Запра<i class="el"></i></span></div>
<div class="t r" style="left:125px;width:78px;top:175px;color:#fff"><span>35</span></div>
<div class="t" style="left:212px;top:175px;color:#fff;width:180px;overflow:hidden"><span>Если ЛОЖЬ</span></div>
<div class="t r" style="left:394px;width:57px;top:175px;color:#fff"><span>1 447</span></div>
<div class="t r" style="left:456px;width:57px;top:175px;color:#fff"><span>0,004548</span></div>
<div class="t r" style="left:518px;width:60px;top:175px;color:#fff"><span>0,47</span></div>
<div class="t" style="left:4px;top:194px;color:#fff"><span>ОбщийМодуль.Запра<i class="el"></i></span></div>
<div class="t r" style="left:125px;width:78px;top:194px;color:#fff"><span>76</span></div>
<div class="t" style="left:212px;top:194px;color:#fff;width:180px;overflow:hidden"><span>Если Выборка.Следующий() Тогда</span></div>
<div class="t r" style="left:394px;width:57px;top:194px;color:#fff"><span>1 447</span></div>
<div class="t r" style="left:456px;width:57px;top:194px;color:#fff"><span>0,004201</span></div>
<div class="t r" style="left:518px;width:60px;top:194px;color:#fff"><span>0,43</span></div>
<div class="t" style="left:4px;top:213px;color:#fff"><span>ОбщийМодуль.Запра<i class="el"></i></span></div>
<div class="t r" style="left:125px;width:78px;top:213px;color:#fff"><span>77</span></div>
<div class="t" style="left:212px;top:213px;color:#fff;width:180px;overflow:hidden"><span>ПредставлениеНомера = Выборк<i class="el"></i></span></div>
<div class="t r" style="left:394px;width:57px;top:213px;color:#fff"><span>1 447</span></div>
<div class="t r" style="left:456px;width:57px;top:213px;color:#fff"><span>0,004006</span></div>
<div class="t r" style="left:518px;width:60px;top:213px;color:#fff"><span>0,41</span></div>
<div class="t" style="left:4px;top:232px;color:#fff"><span>ОбщийМодуль.Запра<i class="el"></i></span></div>
<div class="t r" style="left:125px;width:78px;top:232px;color:#fff"><span>4</span></div>
<div class="t" style="left:212px;top:232px;color:#fff;width:180px;overflow:hidden"><span>Если Данные.Номер = Null Тогда</span></div>
<div class="t r" style="left:394px;width:57px;top:232px;color:#fff"><span>1 447</span></div>
<div class="t r" style="left:456px;width:57px;top:232px;color:#fff"><span>0,003901</span></div>
<div class="t r" style="left:518px;width:60px;top:232px;color:#fff"><span>0,40</span></div>
<div class="t" style="left:4px;top:251px;color:#fff"><span>ОбщийМодуль.Запра<i class="el"></i></span></div>
<div class="t r" style="left:125px;width:78px;top:251px;color:#fff"><span>54</span></div>
<div class="t" style="left:212px;top:251px;color:#fff;width:180px;overflow:hidden"><span>Если МетаданныеПоСсылке.Имя<i class="el"></i></span></div>
<div class="t r" style="left:394px;width:57px;top:251px;color:#fff"><span>1 447</span></div>
<div class="t r" style="left:456px;width:57px;top:251px;color:#fff"><span>0,003347</span></div>
<div class="t r" style="left:518px;width:60px;top:251px;color:#fff"><span>0,34</span></div>
<div class="t r" style="left:394px;width:57px;top:273px;color:#3a2e10"><span>69 460</span></div>
<div class="t r" style="left:456px;width:57px;top:273px;color:#3a2e10"><span>0,969017</span></div>
<div class="t r" style="left:518px;width:60px;top:273px;color:#3a2e10"><span>99,70</span></div>
<div class="lbl" style="left:10px;top:299px;color:#2b2210"><span>Кол.</span></div>
<div class="inp" style="left:56px;top:298px"><span>69 460</span></div>
<div class="lbl" style="left:125px;top:299px;color:#2b2210"><span>Врем</span></div>
<div class="inp" style="left:171px;top:298px"><span>0,969017</span></div>
<div class="lbl" style="left:239px;top:299px;color:#2b2210"><span>%(Врем.)</span></div>
<div class="inp" style="left:309px;top:298px"><span>99,70</span></div>
<div class="a" style="left:10px;top:325px;width:13px;height:13px;border:1px solid #a79f7a;border-radius:3px;background:#fff"></div>
<div class="lbl" style="left:25px;top:323px;color:#2b2210"><span>Для вызова процедур и функций включать время выполнения</span></div>
</div>
</div>
<div class="w" style="left:1229px;top:390px;background:#b3b1b4;border-color:#f4f4f4 #6e6e6e #6e6e6e #f4f4f4">
<svg class="a" style="left:4px;top:3px" width="16" height="16" viewBox="0 0 16 16"><rect x="6.2" y="1.7" width="2.6" height="1.2" fill="#2a2a2a"/><rect x="7" y="2.6" width="1" height="1.6" fill="#3d6b8f"/><path d="M1.8 5.6 L3.3 4.2 M13.2 5.6 L11.7 4.2" stroke="#2f2f2f" stroke-width="1.5"/><defs><linearGradient id="cg" x1="0" y1="0" x2="1" y2="1"><stop offset="0.3" stop-color="#ffffff"/><stop offset="1" stop-color="#bcdcf5"/></linearGradient></defs><circle cx="7.5" cy="9.4" r="5.9" fill="url(#cg)" stroke="#4f7a98" stroke-width="1.1"/><circle cx="7.50" cy="4.90" r="0.65" fill="#ee6a4c"/><circle cx="9.75" cy="5.50" r="0.65" fill="#ee6a4c"/><circle cx="11.40" cy="7.15" r="0.65" fill="#ee6a4c"/><circle cx="12.00" cy="9.40" r="0.65" fill="#ee6a4c"/><circle cx="11.40" cy="11.65" r="0.65" fill="#ee6a4c"/><circle cx="9.75" cy="13.30" r="0.65" fill="#ee6a4c"/><circle cx="7.50" cy="13.90" r="0.65" fill="#ee6a4c"/><circle cx="5.25" cy="13.30" r="0.65" fill="#ee6a4c"/><circle cx="3.60" cy="11.65" r="0.65" fill="#ee6a4c"/><circle cx="3.00" cy="9.40" r="0.65" fill="#ee6a4c"/><circle cx="3.60" cy="7.15" r="0.65" fill="#ee6a4c"/><circle cx="5.25" cy="5.50" r="0.65" fill="#ee6a4c"/><path d="M7.5 9.4 V4.4 M7.5 9.4 L11.1 12.4" stroke="#2a6494" stroke-width="1.1"/><circle cx="7.5" cy="9.4" r="0.9" fill="#222"/></svg>
<div class="tt" style="left:24px;color:#68636d">Новый11 <span style="font-size:10px;position:relative;top:-1px">*</span></div>
<div class="tt" style="left:102px;color:#68636d">(Сервер:admin (48), s1:1560)</div>
<div class="a" style="left:549px;top:15px;width:8px;height:2px;background:#6a6a6a"></div>
<div class="a" style="left:567px;top:6px;width:11px;height:11px;border:1px solid #6a6a6a;border-top-width:2px"></div>
<svg class="a" style="left:588px;top:6px" width="11" height="11" viewBox="0 0 11 11"><path d="M1 1 L10 10 M10 1 L1 10" stroke="#6a6a6a" stroke-width="1.8"/></svg>
<div class="cb">
<div class="a" style="left:0;top:0;width:600px;height:293px;border:1px solid #c9bf95;background:#fdfbf4"></div>
<div class="hdr" style="left:1px;top:1px;width:598px"></div>
<div class="a" style="left:1px;top:21px;width:598px;height:1px;background:#ddd2a8"></div>
<div class="a" style="left:1px;top:22px;width:582px;height:249px;background:#6b9ace"></div>
<div class="a" style="left:1px;top:40px;width:582px;height:1px;background:#b6c9e6"></div>
<div class="a" style="left:1px;top:59px;width:582px;height:1px;background:#b6c9e6"></div>
<div class="a" style="left:1px;top:78px;width:582px;height:1px;background:#b6c9e6"></div>
<div class="a" style="left:1px;top:97px;width:582px;height:1px;background:#b6c9e6"></div>
<div class="a" style="left:1px;top:116px;width:582px;height:1px;background:#b6c9e6"></div>
<div class="a" style="left:1px;top:135px;width:582px;height:1px;background:#b6c9e6"></div>
<div class="a" style="left:1px;top:154px;width:582px;height:1px;background:#b6c9e6"></div>
<div class="a" style="left:1px;top:173px;width:582px;height:1px;background:#b6c9e6"></div>
<div class="a" style="left:1px;top:192px;width:582px;height:1px;background:#b6c9e6"></div>
<div class="a" style="left:1px;top:211px;width:582px;height:1px;background:#b6c9e6"></div>
<div class="a" style="left:1px;top:230px;width:582px;height:1px;background:#b6c9e6"></div>
<div class="a" style="left:1px;top:249px;width:582px;height:1px;background:#b6c9e6"></div>
<div class="a" style="left:1px;top:268px;width:582px;height:1px;background:#b6c9e6"></div>
<div class="ftr" style="left:1px;top:271px;width:598px"></div>
<div class="vl" style="left:124px;top:22px;height:249px;background:#b6c9e6"></div>
<div class="vl" style="left:124px;top:1px;height:20px;background:#c9bf95"></div>
<div class="vl" style="left:124px;top:271px;height:21px;background:#c9bf95"></div>
<div class="vl" style="left:207px;top:22px;height:249px;background:#b6c9e6"></div>
<div class="vl" style="left:207px;top:1px;height:20px;background:#c9bf95"></div>
<div class="vl" style="left:207px;top:271px;height:21px;background:#c9bf95"></div>
<div class="vl" style="left:393px;top:22px;height:249px;background:#b6c9e6"></div>
<div class="vl" style="left:393px;top:1px;height:20px;background:#c9bf95"></div>
<div class="vl" style="left:393px;top:271px;height:21px;background:#c9bf95"></div>
<div class="vl" style="left:455px;top:22px;height:249px;background:#b6c9e6"></div>
<div class="vl" style="left:455px;top:1px;height:20px;background:#c9bf95"></div>
<div class="vl" style="left:455px;top:271px;height:21px;background:#c9bf95"></div>
<div class="vl" style="left:517px;top:22px;height:249px;background:#b6c9e6"></div>
<div class="vl" style="left:517px;top:1px;height:20px;background:#c9bf95"></div>
<div class="vl" style="left:517px;top:271px;height:21px;background:#c9bf95"></div>
<div class="t" style="left:5px;top:2px;color:#3a2a10"><span>Модуль</span></div>
<div class="t" style="left:129px;top:2px;color:#3a2a10"><span>Номер строки</span></div>
<div class="t" style="left:212px;top:2px;color:#3a2a10"><span>Строка</span></div>
<div class="t r" style="left:394px;width:56px;top:2px;color:#3a2a10"><span>Кол.</span></div>
<div class="t" style="left:461px;top:2px;color:#3a2a10"><span>Врем<i class="el"></i></span></div>
<svg class="a" style="left:503px;top:9px" width="7" height="4"><path d="M0 4 L3.5 0 L7 4Z" fill="#111"/></svg>
<div class="t" style="left:523px;top:2px;color:#3a2a10;letter-spacing:-0.3px"><span>%(Врем.) (<i class="el"></i></span></div>
<div class="a" style="left:583px;top:1px;width:16px;height:20px;border-left:1px solid #c9bf95;background:linear-gradient(90deg,#fffdf5,#f1e8c8)"></div>
<svg class="a" style="left:587px;top:7px" width="8" height="7"><path d="M0 7 L4 0 L8 7Z" fill="#c9c5b3"/></svg>
<div class="a" style="left:583px;top:22px;width:16px;height:65px;background:linear-gradient(90deg,#fdf9ec,#eee3bd);border-bottom:1px solid #d9cea4"></div>
<div class="a" style="left:589px;top:52px;width:5px;height:5px;border-radius:50%;background:radial-gradient(circle at 65% 65%,#ebe5cf 15%,#b7b093 95%)"></div>
<div class="a" style="left:583px;top:271px;width:16px;height:21px;border-left:1px solid #c9bf95;background:linear-gradient(90deg,#fffdf5,#efe6c6)"></div>
<svg class="a" style="left:587px;top:279px" width="8" height="7"><path d="M0 0 L8 0 L4 7Z" fill="#8c8c8c"/></svg>
<div class="t" style="left:4px;top:23px;color:#fff"><span>Обработка.РМ_Мене<i class="el"></i></span></div>
<div class="t r" style="left:125px;width:78px;top:23px;color:#fff"><span>1 352</span></div>
<div class="t" style="left:212px;top:23px;color:#fff;width:180px;overflow:hidden"><span>Дерево = РезультатЗапроса.Выг<i class="el"></i></span></div>
<div class="t r" style="left:394px;width:57px;top:23px;color:#fff"><span>1</span></div>
<div class="t r" style="left:456px;width:57px;top:23px;color:#fff"><span>0,056436</span></div>
<div class="t r" style="left:518px;width:60px;top:23px;color:#fff"><span>33,37</span></div>
<div class="t" style="left:4px;top:42px;color:#fff"><span>ОбщийМодуль.Запра<i class="el"></i></span></div>
<div class="t r" style="left:125px;width:78px;top:42px;color:#fff"><span>106</span></div>
<div class="t" style="left:212px;top:42px;color:#fff;width:180px;overflow:hidden"><span>Представление = СтроковыеФун<i class="el"></i></span></div>
<div class="t r" style="left:394px;width:57px;top:42px;color:#fff"><span>1 447</span></div>
<div class="t r" style="left:456px;width:57px;top:42px;color:#fff"><span>0,020235</span></div>
<div class="t r" style="left:518px;width:60px;top:42px;color:#fff"><span>11,96</span></div>
<div class="t" style="left:4px;top:61px;color:#fff"><span>ОбщийМодуль.Запра<i class="el"></i></span></div>
<div class="t r" style="left:125px;width:78px;top:61px;color:#fff"><span>26</span></div>
<div class="t" style="left:212px;top:61px;color:#fff;width:180px;overflow:hidden"><span>МетаданныеПоСсылке = Данные<i class="el"></i></span></div>
<div class="t r" style="left:394px;width:57px;top:61px;color:#fff"><span>1 447</span></div>
<div class="t r" style="left:456px;width:57px;top:61px;color:#fff"><span>0,006905</span></div>
<div class="t r" style="left:518px;width:60px;top:61px;color:#fff"><span>4,08</span></div>
<div class="t" style="left:4px;top:80px;color:#fff"><span>ОбщийМодуль.Строк<i class="el"></i></span></div>
<div class="t r" style="left:125px;width:78px;top:80px;color:#fff"><span>209</span></div>
<div class="t" style="left:212px;top:80px;color:#fff;width:180px;overflow:hidden"><span>ЕстьПараметрыСПроцентом = Ст<i class="el"></i></span></div>
<div class="t r" style="left:394px;width:57px;top:80px;color:#fff"><span>1 447</span></div>
<div class="t r" style="left:456px;width:57px;top:80px;color:#fff"><span>0,005201</span></div>
<div class="t r" style="left:518px;width:60px;top:80px;color:#fff"><span>3,08</span></div>
<div class="t" style="left:4px;top:99px;color:#fff"><span>ОбщийМодуль.Запра<i class="el"></i></span></div>
<div class="t r" style="left:125px;width:78px;top:99px;color:#fff"><span>27</span></div>
<div class="t" style="left:212px;top:99px;color:#fff;width:180px;overflow:hidden"><span>Если ЗначениеЗаполнено(Метад<i class="el"></i></span></div>
<div class="t r" style="left:394px;width:57px;top:99px;color:#fff"><span>1 447</span></div>
<div class="t r" style="left:456px;width:57px;top:99px;color:#fff"><span>0,005120</span></div>
<div class="t r" style="left:518px;width:60px;top:99px;color:#fff"><span>3,03</span></div>
<div class="t" style="left:4px;top:118px;color:#fff"><span>ОбщийМодуль.Запра<i class="el"></i></span></div>
<div class="t r" style="left:125px;width:78px;top:118px;color:#fff"><span>35</span></div>
<div class="t" style="left:212px;top:118px;color:#fff;width:180px;overflow:hidden"><span>Если ЛОЖЬ</span></div>
<div class="t r" style="left:394px;width:57px;top:118px;color:#fff"><span>1 447</span></div>
<div class="t r" style="left:456px;width:57px;top:118px;color:#fff"><span>0,004229</span></div>
<div class="t r" style="left:518px;width:60px;top:118px;color:#fff"><span>2,50</span></div>
<div class="t" style="left:4px;top:137px;color:#fff"><span>ОбщийМодуль.Запра<i class="el"></i></span></div>
<div class="t r" style="left:125px;width:78px;top:137px;color:#fff"><span>4</span></div>
<div class="t" style="left:212px;top:137px;color:#fff;width:180px;overflow:hidden"><span>Если Данные.Номер = Null Тогда</span></div>
<div class="t r" style="left:394px;width:57px;top:137px;color:#fff"><span>1 447</span></div>
<div class="t r" style="left:456px;width:57px;top:137px;color:#fff"><span>0,003317</span></div>
<div class="t r" style="left:518px;width:60px;top:137px;color:#fff"><span>1,96</span></div>
<div class="t" style="left:4px;top:156px;color:#fff"><span>ОбщийМодуль.Запра<i class="el"></i></span></div>
<div class="t r" style="left:125px;width:78px;top:156px;color:#fff"><span>54</span></div>
<div class="t" style="left:212px;top:156px;color:#fff;width:180px;overflow:hidden"><span>Если МетаданныеПоСсылке.Имя<i class="el"></i></span></div>
<div class="t r" style="left:394px;width:57px;top:156px;color:#fff"><span>1 447</span></div>
<div class="t r" style="left:456px;width:57px;top:156px;color:#fff"><span>0,003234</span></div>
<div class="t r" style="left:518px;width:60px;top:156px;color:#fff"><span>1,91</span></div>
<div class="t" style="left:4px;top:175px;color:#fff"><span>ОбщийМодуль.Запра<i class="el"></i></span></div>
<div class="t r" style="left:125px;width:78px;top:175px;color:#fff"><span>31</span></div>
<div class="t" style="left:212px;top:175px;color:#fff;width:180px;overflow:hidden"><span>ЗаголовокПредставление = Мета<i class="el"></i></span></div>
<div class="t r" style="left:394px;width:57px;top:175px;color:#fff"><span>1 447</span></div>
<div class="t r" style="left:456px;width:57px;top:175px;color:#fff"><span>0,002740</span></div>
<div class="t r" style="left:518px;width:60px;top:175px;color:#fff"><span>1,62</span></div>
<div class="t" style="left:4px;top:194px;color:#fff"><span>ОбщийМодуль.Строк<i class="el"></i></span></div>
<div class="t r" style="left:125px;width:78px;top:194px;color:#fff"><span>224</span></div>
<div class="t" style="left:212px;top:194px;color:#fff;width:180px;overflow:hidden"><span>ШаблонСтроки = СтрЗаменить(Ш<i class="el"></i></span></div>
<div class="t r" style="left:394px;width:57px;top:194px;color:#fff"><span>1 447</span></div>
<div class="t r" style="left:456px;width:57px;top:194px;color:#fff"><span>0,002559</span></div>
<div class="t r" style="left:518px;width:60px;top:194px;color:#fff"><span>1,51</span></div>
<div class="t" style="left:4px;top:213px;color:#fff"><span>ОбщийМодуль.Запра<i class="el"></i></span></div>
<div class="t r" style="left:125px;width:78px;top:213px;color:#fff"><span>57</span></div>
<div class="t" style="left:212px;top:213px;color:#fff;width:180px;overflow:hidden"><span>ИначеЕсли МетаданныеПоСсылк<i class="el"></i></span></div>
<div class="t r" style="left:394px;width:57px;top:213px;color:#fff"><span>1 447</span></div>
<div class="t r" style="left:456px;width:57px;top:213px;color:#fff"><span>0,002455</span></div>
<div class="t r" style="left:518px;width:60px;top:213px;color:#fff"><span>1,45</span></div>
<div class="t" style="left:4px;top:232px;color:#fff"><span>ОбщийМодуль.Запра<i class="el"></i></span></div>
<div class="t r" style="left:125px;width:78px;top:232px;color:#fff"><span>60</span></div>
<div class="t" style="left:212px;top:232px;color:#fff;width:180px;overflow:hidden"><span>ИначеЕсли МетаданныеПоСсылк<i class="el"></i></span></div>
<div class="t r" style="left:394px;width:57px;top:232px;color:#fff"><span>1 447</span></div>
<div class="t r" style="left:456px;width:57px;top:232px;color:#fff"><span>0,002411</span></div>
<div class="t r" style="left:518px;width:60px;top:232px;color:#fff"><span>1,43</span></div>
<div class="t" style="left:4px;top:251px;color:#fff"><span>ОбщийМодуль.Строк<i class="el"></i></span></div>
<div class="t r" style="left:125px;width:78px;top:251px;color:#fff"><span>210</span></div>
<div class="t" style="left:212px;top:251px;color:#fff;width:180px;overflow:hidden"><span>Или СтрНайти(Параметр2, "%")</span></div>
<div class="t r" style="left:394px;width:57px;top:251px;color:#fff"><span>1 447</span></div>
<div class="t r" style="left:456px;width:57px;top:251px;color:#fff"><span>0,002362</span></div>
<div class="t r" style="left:518px;width:60px;top:251px;color:#fff"><span>1,40</span></div>
<div class="t r" style="left:394px;width:57px;top:273px;color:#3a2e10"><span>60 778</span></div>
<div class="t r" style="left:456px;width:57px;top:273px;color:#3a2e10"><span>0,166462</span></div>
<div class="t r" style="left:518px;width:60px;top:273px;color:#3a2e10"><span>98,43</span></div>
<div class="lbl" style="left:10px;top:299px;color:#2b2210"><span>Кол.</span></div>
<div class="inp" style="left:56px;top:298px"><span>60 778</span></div>
<div class="lbl" style="left:125px;top:299px;color:#2b2210"><span>Врем</span></div>
<div class="inp" style="left:171px;top:298px"><span>0,166462</span></div>
<div class="lbl" style="left:239px;top:299px;color:#2b2210"><span>%(Врем.)</span></div>
<div class="inp" style="left:309px;top:298px"><span>98,43</span></div>
<div class="a" style="left:10px;top:325px;width:13px;height:13px;border:1px solid #a79f7a;border-radius:3px;background:#fff"></div>
<div class="lbl" style="left:25px;top:323px;color:#2b2210"><span>Для вызова процедур и функций включать время выполнения</span></div>
</div>
</div>
<div class="badge" style="left:157px;top:339px;background:#d9603e"><svg style="position:absolute;left:0;top:0" width="31" height="31"><path d="M16 7.6 H19.3 V22.9 H16 V12.3 Q14.3 13.9 12.1 14.6 V11.6 Q14.6 10.6 16 7.6Z" fill="#fff"/></svg></div>
<div class="badge" style="left:762px;top:337px;background:#4aa7c3"><span style="display:inline-block;transform:scaleX(.88);-webkit-text-stroke:.5px #fff">3</span></div>
<div class="badge" style="left:1379px;top:332px;background:#6da391"><span style="display:inline-block;transform:scaleX(.88);-webkit-text-stroke:.5px #fff">5</span></div>
<div class="badge" style="left:152px;top:715px;background:#d9603e"><span style="display:inline-block;transform:scaleX(.88);-webkit-text-stroke:.5px #fff">2</span></div>
<div class="badge" style="left:767px;top:719px;background:#4aa7c3"><span style="display:inline-block;transform:scaleX(.88);-webkit-text-stroke:.5px #fff">4</span></div>
<div class="badge" style="left:1380px;top:717px;background:#6a6a6a"><span style="display:inline-block;transform:scaleX(.88);-webkit-text-stroke:.5px #fff">6</span></div>
</body></html>
